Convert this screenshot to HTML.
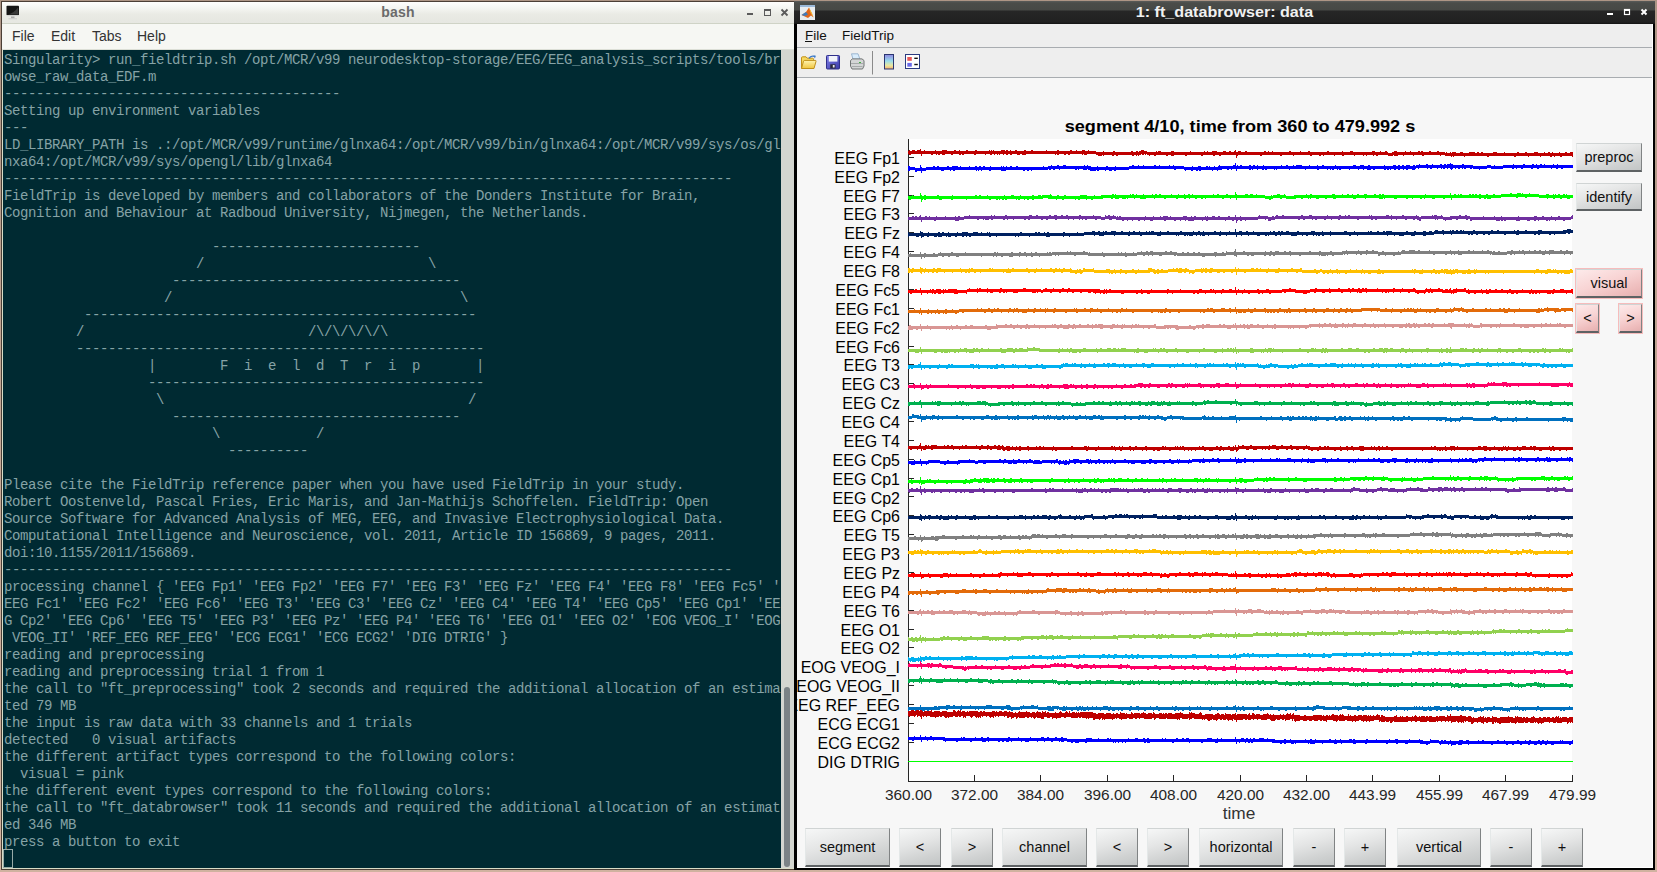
<!DOCTYPE html>
<html><head><meta charset="utf-8">
<style>
*{margin:0;padding:0;box-sizing:border-box}
html,body{width:1657px;height:872px;overflow:hidden}
body{position:relative;background:linear-gradient(#ad9585,#c4a896 50%,#d0b2a0);font-family:"Liberation Sans",sans-serif}
.abs{position:absolute}
/* bash window */
#bash{position:absolute;left:1px;top:1px;width:794px;height:869px;background:#d9dcc6;border:1px solid #4b3f36}
#btitle{position:absolute;left:0;top:0;width:792px;height:22px;background:linear-gradient(#fefefd 0%,#f4f5f1 30%,#e9eae4 60%,#e6e7e1 100%);border-bottom:1px solid #cfd3c6}
#btitle .t{position:absolute;left:0;width:792px;top:1.5px;text-align:center;font-weight:bold;font-size:14px;color:#6b6b6b;letter-spacing:0.2px}
#bmenu{position:absolute;left:0;top:22px;width:792px;height:26px;background:#f6f7f3;border-bottom:1px solid #dcdfd6}
#bmenu span{position:absolute;top:4px;font-size:14px;color:#333}
#term{position:absolute;left:1px;top:48px;width:778px;height:818px;background:#002a32;overflow:hidden}
#term pre{position:absolute;left:1px;top:2px;font-family:"Liberation Mono",monospace;font-size:14px;letter-spacing:-0.4px;line-height:17px;color:#86a3a6;white-space:pre}
#cursor{position:absolute;left:0px;top:799px;width:10px;height:19px;border:1px solid #98aaa8}
#sb{position:absolute;left:779px;top:48px;width:13px;height:818px;background:#d3d6d0}
#thumb{position:absolute;left:3px;top:637px;width:6px;height:180px;background:#7b8386;border-radius:3px}
/* matlab window */
#mw{position:absolute;left:794px;top:1px;width:861px;height:869px;background:#000;}
#mtitle{position:absolute;left:0;top:0;width:861px;height:23px;background:linear-gradient(#5a5c5a 0px,#4a4c49 2px,#474946 9px,#262626 10px,#212121 21px,#121212 23px)}
#mtitle .t{position:absolute;left:0;width:861px;top:1.5px;text-align:center;font-weight:bold;font-size:15.5px;color:#f0f0f0;transform:scaleX(1.04);transform-origin:431px 0}
#mcontent{position:absolute;left:3px;top:23px;width:856px;height:844px;background:#f7f7f7;border-right:1px solid #fff;border-bottom:1px solid #fff}
#mmenu{position:absolute;left:0;top:0;width:855px;height:24px;background:#eeeeee;border-bottom:1px solid #a8acb0}
#mmenu span{position:absolute;top:4px;font-size:13.5px;color:#111}
#mtool{position:absolute;left:0;top:24px;width:855px;height:30px;background:#eeeeee;border-bottom:1px solid #a8acb0}
.yl{position:absolute;left:700px;width:198px;text-align:right;font-size:16.5px;line-height:19px;color:#000;white-space:nowrap;transform:scaleX(0.967);transform-origin:198px 0}
#ylwrap{position:absolute;left:797px;top:0;width:120px;height:872px;overflow:hidden}
#ylwrap .yl{left:-95.5px}
.xl{position:absolute;top:786px;width:80px;text-align:center;font-size:15.4px;line-height:17px;color:#262626}
.btn{position:absolute;text-align:center;font-size:14.5px;color:#111;background:linear-gradient(165deg,#f6f7f7 0%,#e4e5e5 40%,#cfd1d1 75%,#c2c5c5 100%);border:1px solid #d0d4d4;border-left-color:#e4e8e8;border-right-color:#808384;border-bottom:2px solid #5e6264}
.btn.pink{background:linear-gradient(160deg,#fdeaea 0%,#f8d4d4 45%,#eebcbc 80%,#e4b0b0 100%);box-shadow:0 0 0 1px #f6bcbc}
</style></head><body>
<div id="bash">
  <div id="btitle">
    <svg class="abs" style="left:4px;top:3px" width="16" height="17" viewBox="0 0 16 17"><rect x="0.5" y="0.8" width="12.5" height="9.5" rx="0.8" fill="#151515"/><path d="M2 9.5 Q8 8 12 2.5 L12.5 9.5Z" fill="#3a3a3a"/><rect x="0.5" y="10.3" width="12.5" height="1.2" fill="#e0e0e0"/><rect x="5" y="11.5" width="3.5" height="1.8" fill="#aaa"/><rect x="2.5" y="13.3" width="8.5" height="1" fill="#ccc"/></svg>
    <div class="t">bash</div>
    <svg class="abs" style="left:740px;top:5px" width="52" height="14" viewBox="0 0 52 14" shape-rendering="crispEdges"><rect x="5" y="6" width="6" height="2" fill="#5a5a5a"/><rect x="22.5" y="2.5" width="6" height="6" fill="none" stroke="#5a5a5a" stroke-width="1"/><rect x="22" y="2" width="7" height="2" fill="#5a5a5a"/><path d="M39.5 2.5L45.5 8.5M45.5 2.5L39.5 8.5" stroke="#5a5a5a" stroke-width="1.8" shape-rendering="auto"/></svg>
  </div>
  <div id="bmenu"><span style="left:10px">File</span><span style="left:49px">Edit</span><span style="left:90px">Tabs</span><span style="left:135px">Help</span></div>
  <div id="term"><pre>Singularity&gt; run_fieldtrip.sh /opt/MCR/v99 neurodesktop-storage/EEG/EEG_analysis_scripts/tools/br
owse_raw_data_EDF.m
------------------------------------------
Setting up environment variables
---
LD_LIBRARY_PATH is .:/opt/MCR/v99/runtime/glnxa64:/opt/MCR/v99/bin/glnxa64:/opt/MCR/v99/sys/os/gl
nxa64:/opt/MCR/v99/sys/opengl/lib/glnxa64
-------------------------------------------------------------------------------------------
FieldTrip is developed by members and collaborators of the Donders Institute for Brain,
Cognition and Behaviour at Radboud University, Nijmegen, the Netherlands.

                          --------------------------
                        /                            \
                     ------------------------------------
                    /                                    \
          -------------------------------------------------
         /                            /\/\/\/\/\
         ---------------------------------------------------
                  |        F  i  e  l  d  T  r  i  p       |
                  ------------------------------------------
                   \                                      /
                     ------------------------------------
                          \            /
                            ----------

Please cite the FieldTrip reference paper when you have used FieldTrip in your study.
Robert Oostenveld, Pascal Fries, Eric Maris, and Jan-Mathijs Schoffelen. FieldTrip: Open
Source Software for Advanced Analysis of MEG, EEG, and Invasive Electrophysiological Data.
Computational Intelligence and Neuroscience, vol. 2011, Article ID 156869, 9 pages, 2011.
doi:10.1155/2011/156869.
-------------------------------------------------------------------------------------------
processing channel { &#x27;EEG Fp1&#x27; &#x27;EEG Fp2&#x27; &#x27;EEG F7&#x27; &#x27;EEG F3&#x27; &#x27;EEG Fz&#x27; &#x27;EEG F4&#x27; &#x27;EEG F8&#x27; &#x27;EEG Fc5&#x27; &#x27;
EEG Fc1&#x27; &#x27;EEG Fc2&#x27; &#x27;EEG Fc6&#x27; &#x27;EEG T3&#x27; &#x27;EEG C3&#x27; &#x27;EEG Cz&#x27; &#x27;EEG C4&#x27; &#x27;EEG T4&#x27; &#x27;EEG Cp5&#x27; &#x27;EEG Cp1&#x27; &#x27;EE
G Cp2&#x27; &#x27;EEG Cp6&#x27; &#x27;EEG T5&#x27; &#x27;EEG P3&#x27; &#x27;EEG Pz&#x27; &#x27;EEG P4&#x27; &#x27;EEG T6&#x27; &#x27;EEG O1&#x27; &#x27;EEG O2&#x27; &#x27;EOG VEOG_I&#x27; &#x27;EOG
 VEOG_II&#x27; &#x27;REF_EEG REF_EEG&#x27; &#x27;ECG ECG1&#x27; &#x27;ECG ECG2&#x27; &#x27;DIG DTRIG&#x27; }
reading and preprocessing
reading and preprocessing trial 1 from 1
the call to &quot;ft_preprocessing&quot; took 2 seconds and required the additional allocation of an estima
ted 79 MB
the input is raw data with 33 channels and 1 trials
detected   0 visual artifacts
the different artifact types correspond to the following colors:
  visual = pink
the different event types correspond to the following colors:
the call to &quot;ft_databrowser&quot; took 11 seconds and required the additional allocation of an estimat
ed 346 MB
press a button to exit</pre><div id="cursor"></div></div>
  <div id="sb"><div id="thumb"></div></div>
</div>
<div id="mw">
  <div id="mtitle">
    <svg class="abs" style="left:6px;top:4px" width="15" height="16" viewBox="0 0 15 16"><rect x="0" y="0" width="15" height="15" fill="#e8ecf0"/><rect x="0" y="0" width="15" height="2" fill="#9ab8d8"/><path d="M1.5 10 L6 7 L9 2.5 L13.5 12.5 L11 10.5 L8 13 Z" fill="#e0651b"/><path d="M1.5 10 L6 7 L8 9.5 L5 11 Z" fill="#3b7bc0"/><path d="M9 2.5 L12 8 L13.5 12.5 L10.5 8Z" fill="#f2b233"/></svg>
    <div class="t">1: ft_databrowser: data</div>
    <svg class="abs" style="left:806px;top:6px" width="52" height="14" viewBox="0 0 52 14"><rect x="7" y="6" width="6" height="2" fill="#fff"/><rect x="24.5" y="2.5" width="5" height="5" fill="none" stroke="#fff" stroke-width="1.2"/><rect x="24" y="2" width="6" height="2" fill="#fff"/><path d="M41.5 2.5L46.5 7.5M46.5 2.5L41.5 7.5" stroke="#fff" stroke-width="2"/></svg>
  </div>
  <div id="mcontent">
    <div id="mmenu"><span style="left:8px;">File</span><span style="left:45px">FieldTrip</span><div class="abs" style="left:8px;top:17px;width:7px;height:1px;background:#111"></div></div>
    <div id="mtool">
      <svg class="abs" style="left:0;top:0" width="140" height="30" viewBox="0 0 140 30">
        <defs><linearGradient id="fo" x1="0" y1="0" x2="0" y2="1"><stop offset="0" stop-color="#fff4b0"/><stop offset="1" stop-color="#f0c640"/></linearGradient>
        <linearGradient id="fl" x1="0" y1="0" x2="1" y2="1"><stop offset="0" stop-color="#8080e8"/><stop offset="1" stop-color="#3a3aa8"/></linearGradient>
        <linearGradient id="cb" x1="0" y1="0" x2="0" y2="1"><stop offset="0" stop-color="#8e86e0"/><stop offset="0.45" stop-color="#98dcec"/><stop offset="0.75" stop-color="#e8e8a0"/><stop offset="1" stop-color="#f8b070"/></linearGradient></defs>
        <path d="M4.5 20.5V9.8q0-1 1-1h3.5l1.2 1.4h5.3q1 0 1 1v1.3" fill="#f6d860" stroke="#c0901a" stroke-width="1"/>
        <path d="M4.5 20.5l2-7.3q0.3-0.8 1.2-0.8h10.6q1 0 0.7 1l-2 7.1z" fill="url(#fo)" stroke="#c0901a" stroke-width="1"/>
        <path d="M12 10.3q2-3.2 5.5-1.8" fill="none" stroke="#3a78c8" stroke-width="1.3"/><path d="M16.3 7.2l2.6 0.6-1 2.6z" fill="#3a78c8"/>
        <rect x="29.5" y="7.5" width="13" height="13.5" rx="0.8" fill="url(#fl)" stroke="#30308a"/>
        <rect x="31.8" y="8" width="8.6" height="5.6" fill="#f2f4fa"/>
        <rect x="33.3" y="16.3" width="5.2" height="4.2" fill="#2a2a3a"/><rect x="35.8" y="17" width="1.8" height="2.5" fill="#e8e8f0"/>
        <path d="M54.5 5.8h6.5l2 5.5h-7z" fill="#d8ecfc" stroke="#8aa8c8" stroke-width="0.8"/>
        <path d="M53.5 12.5l2-1.6h9.5l2 1.6v5.5l-1.5 3h-10.5l-1.5-3z" fill="#d4d6d6" stroke="#707474" stroke-width="1"/>
        <path d="M54 15.5h12.5M55 18.5h10.5" stroke="#9a9e9e" stroke-width="0.8"/><rect x="62" y="14" width="2" height="1" fill="#40b040"/>
        <rect x="75" y="3" width="1" height="23.5" fill="#8a8a8a"/>
        <rect x="87.5" y="6.5" width="9" height="14.5" fill="url(#cb)" stroke="#2a3570"/>
        <rect x="108.5" y="6.5" width="14" height="14" fill="#fff" stroke="#2a3a80"/><rect x="110.3" y="9" width="4.5" height="3.8" fill="#e85858"/><rect x="110.3" y="14.9" width="4.5" height="3.8" fill="#6a6ae8"/><rect x="117.3" y="9.6" width="3.5" height="1.4" fill="#111"/><rect x="117.3" y="15.8" width="3.5" height="1.4" fill="#111"/>
      </svg>
    </div>
  </div>
</div>
<div class="abs" style="left:1040px;top:117px;width:400px;text-align:center;font-weight:bold;font-size:16px;line-height:20px;color:#000;white-space:nowrap;transform:scaleX(1.133)">segment 4/10, time from 360 to 479.992 s</div>
<svg id="plot" width="1657" height="872" viewBox="0 0 1657 872" shape-rendering="crispEdges" style="position:absolute;left:0;top:0">
<rect x="909" y="139" width="663" height="642" fill="#ffffff"/>
<path d="M908 157.5h6M908 176.5h6M908 195.5h6M908 213.5h6M908 232.5h6M908 251.5h6M908 270.5h6M908 289.5h6M908 308.5h6M908 327.5h6M908 346.5h6M908 364.5h6M908 383.5h6M908 402.5h6M908 421.5h6M908 440.5h6M908 459.5h6M908 478.5h6M908 496.5h6M908 515.5h6M908 534.5h6M908 553.5h6M908 572.5h6M908 591.5h6M908 610.5h6M908 629.5h6M908 647.5h6M908 666.5h6M908 685.5h6M908 704.5h6M908 723.5h6M908 742.5h6M908 761.5h6M908.5 781v-6M974.5 781v-6M1040.5 781v-6M1107.5 781v-6M1173.5 781v-6M1240.5 781v-6M1306.5 781v-6M1372.5 781v-6M1439.5 781v-6M1505.5 781v-6M1572.5 781v-6" stroke="#262626" stroke-width="1" fill="none"/>
<path d="M908.5 139V781.5H1572.5" stroke="#262626" stroke-width="1" fill="none"/>
<path fill="#bf0000" d="M908 151h1v-1h1v1h2v-1h3v1h2v-1h3v-1h1v2h3v-1h1v1h10v-1h1v1h6v-1h5v1h7v-1h2v1h3v-1h1v1h6v-1h2v1h7v-1h2v1h12v-1h1v1h1v-1h1v1h1v-1h1v1h7v-1h4v1h1v-1h2v1h2v-1h1v1h4v-1h2v1h7v-1h2v1h5v-1h2v1h13v-1h1v1h10v-1h2v1h11v-1h2v1h4v-1h1v1h5v-1h3v1h3v-1h1v1h7v1h7v-1h1v1h9v-1h2v1h16v-1h2v1h3v-1h2v1h1v-1h2v-1h3v1h3v1h9v-1h1v1h1v-1h3v1h10v-1h3v1h16v-1h1v1h13v-1h1v1h2v-1h1v1h4v-1h5v1h6v-1h3v1h3v-1h2v1h3v-1h1v-1h1v2h2v-1h3v1h4v-1h2v1h17v-1h2v1h2v-1h1v1h3v-1h1v1h16v-1h2v1h9v-1h1v1h7v-1h2v1h17v-1h2v1h13v-1h1v1h7v-1h3v1h19v-1h3v1h5v-1h1v1h4v-1h2v1h1v1h4v-1h2v-1h3v1h8v-1h1v1h4v-1h1v1h7v-1h2v1h1v-1h2v1h6v-1h2v1h6v-1h2v1h6v1h1v-1h1v1h3v-1h1v1h1v-1h4v1h4v-1h3v1h6v-1h6v1h2v-1h2v1h2v-1h2v1h10v-1h4v1h7v-1h1v1h12v-1h2v1h6v-1h2v1h7v-1h4v1h6v-1h1v1h3v-1h2v1h2v-1h1v1h6v-1h1v1h5v-1h2v1h3v-1h3v5h-1v-1h-10v1h-2v-1h-5v1h-1v-1h-2v1h-2v-1h-9v1h-1v-1h-11v1h-1v-1h-12v1h-2v-1h-25v1h-2v-1h-22v1h-1v-1h-10v1h-1v-1h-1v1h-1v-1h-6v-1h-4v1h-1v-1h-16v1h-2v-1h-8v1h-1v-1h-9v1h-1v-1h-5v1h-4v-1h-1v1h-5v-1h-10v1h-2v-1h-2v1h-1v-1h-6v1h-1v-1h-2v1h-1v-1h-8v1h-1v-1h-10v1h-2v-1h-7v1h-1v-1h-10v1h-1v-1h-2v1h-2v-1h-7v1h-2v-1h-16v1h-1v-1h-11v1h-2v-1h-18v1h-2v-1h-22v1h-1v2h-1v-3h-15v1h-2v-1h-4v1h-2v-1h-10v1h-2v-1h-14v1h-2v-1h-11v1h-3v-1h-3v1h-2v-1h-10v1h-2v-1h-4v1h-1v-1h-2v-1h-1v1h-1v-1h-1v1h-2v-1h-1v1h-2v1h-1v-1h-1v1h-1v-1h-2v1h-2v-1h-14v1h-2v-1h-2v1h-2v-1h-8v1h-1v-1h-1v1h-4v-1h-2v-1h-9v1h-3v-1h-1v1h-1v-1h-12v1h-2v-1h-2v1h-2v-1h-5v1h-2v-1h-1v1h-1v-1h-29v1h-4v-1h-2v1h-3v-1h-5v1h-2v-1h-2v1h-2v-1h-2v1h-1v-1h-3v1h-1v-1h-1v1h-1v-1h-2v1h-1v-1h-2v1h-2v-1h-4v1h-1v-1h-9v1h-2v-1h-10v1h-2v-1h-1v1h-2v-1h-6v1h-2v-1h-6v1h-3v-1h-2v1h-2v-1h-1v1h-1v-1h-3v1h-2v-1h-9v2h-1v-2h-10v1h-2v-1h-1Z"/>
<path fill="#0000ff" d="M908 166h2v1h5v1h5v-3h1v2h1v1h4v-1h7v-1h2v1h2v-1h2v1h8v-1h2v1h3v-1h6v1h2v-1h1v1h8v-1h1v1h5v-1h2v1h2v-1h2v1h2v-1h2v1h5v-1h1v1h10v-1h1v1h1v-1h1v1h2v-1h1v1h3v-1h2v1h4v-1h2v1h25v-1h1v1h4v-1h3v-1h1v1h5v-1h2v1h4v-1h3v1h18v-1h1v1h2v-1h1v1h3v1h6v-1h1v1h8v-1h2v1h7v-1h1v1h13v-1h3v-1h2v1h4v-1h1v1h4v-1h1v1h10v-1h2v1h3v-1h1v1h9v-1h1v1h3v-1h1v1h10v1h8v-1h1v1h5v-1h3v1h5v-1h2v1h1v-1h1v1h4v-1h1v1h3v-1h1v-1h1v1h13v-1h2v-2h1v3h1v-1h1v1h2v-1h2v1h7v-1h2v1h2v-1h2v1h2v-1h1v1h5v-1h1v1h17v-1h1v1h4v-1h2v1h5v-1h1v1h2v-1h6v1h7v-1h1v1h7v-1h1v1h4v-1h2v1h11v-1h1v1h17v-1h3v1h4v-1h4v1h4v-1h2v1h14v-1h1v1h8v-1h3v1h2v-1h2v1h2v-1h2v1h2v-1h4v1h3v-1h2v1h1v-1h3v-1h1v1h6v-1h2v1h4v-1h1v1h7v-1h2v1h2v-1h2v1h1v-1h3v-1h1v1h2v1h9v-1h2v1h9v1h14v-1h4v1h3v-1h1v1h8v-1h10v-1h1v1h9v-1h2v1h7v-1h2v1h2v-1h1v1h3v-1h2v1h2v-1h1v1h8v-1h1v1h3v-1h1v1h15v3h-10v1h-2v-1h-3v1h-2v-1h-4v1h-1v-1h-12v1h-2v-1h-4v1h-2v-1h-8v1h-2v-1h-4v1h-1v-1h-2v1h-2v-1h-9v1h-12v-1h-4v1h-7v1h-1v-1h-6v-1h-1v1h-2v-1h-4v1h-2v-1h-1v1h-1v-1h-2v1h-2v-1h-2v1h-1v-1h-2v1h-1v1h-1v-1h-1v-1h-2v1h-1v-1h-2v1h-2v-1h-1v1h-1v-1h-3v1h-1v-1h-5v1h-2v-1h-2v1h-1v-1h-8v1h-1v-1h-2v1h-1v1h-3v-1h-4v1h-2v-1h-2v1h-1v-1h-3v1h-2v-1h-2v1h-2v-1h-3v1h-1v-1h-1v1h-2v-1h-1v1h-2v-1h-9v1h-2v-1h-2v1h-4v-1h-3v1h-1v-1h-4v1h-1v-1h-8v1h-1v-1h-8v1h-2v-1h-1v1h-1v-1h-3v1h-2v-1h-1v1h-1v-1h-2v1h-1v-1h-8v1h-2v-1h-11v1h-1v-1h-15v1h-1v-1h-12v1h-1v-1h-1v1h-1v-1h-7v1h-2v-1h-1v1h-2v-1h-4v1h-1v-1h-4v1h-1v-1h-1v1h-2v-1h-12v2h-1v-2h-4v1h-1v-1h-2v1h-2v-1h-5v1h-4v1h-1v-1h-4v1h-1v-1h-11v1h-2v-1h-1v1h-2v-1h-3v1h-2v-1h-5v1h-1v-1h-1v-1h-8v1h-2v-1h-45v1h-13v1h-2v-1h-2v1h-3v-1h-3v1h-1v-1h-6v1h-2v-1h-1v1h-6v-1h-2v-1h-1v1h-4v-1h-4v1h-1v-1h-1v1h-2v-1h-15v1h-1v-1h-4v1h-2v-1h-2v1h-2v-1h-1v1h-16v1h-1v-1h-2v1h-2v-1h-2v1h-2v-1h-17v1h-5v-1h-10v1h-2v-1h-7v1h-1v-1h-2v1h-1v-1h-1v1h-1v-1h-21v1h-2v-1h-2v1h-1v-1h-6v1h-3v-1h-15v1h-4v2h-1v-2h-4v1h-2v-2h-5v1h-2Z"/>
<path fill="#00ff00" d="M908 196h4v-1h1v1h7v-3h1v2h1v1h2v-1h2v1h11v-1h2v1h13v-1h1v1h22v-1h2v1h2v-1h2v1h6v-1h1v1h16v-1h1v1h6v-1h3v1h6v-1h1v1h11v-1h2v1h4v-1h3v1h1v-1h8v-1h1v1h1v1h5v-1h2v1h5v-1h2v1h14v-1h7v1h7v-1h1v1h6v-1h11v-1h2v1h1v-1h1v1h14v-1h1v1h1v-1h2v1h2v-1h1v1h6v-1h1v1h8v-1h1v1h2v-1h2v1h2v-1h2v1h10v-1h1v1h6v-1h1v1h5v-1h1v1h3v-1h2v1h2v-1h1v1h20v-1h1v1h3v-1h2v1h7v-1h2v1h7v-3h1v2h1v1h8v-1h3v1h2v-1h3v1h3v-1h1v1h8v1h6v-1h1v1h1v-1h4v-1h3v1h4v-1h1v1h1v1h8v-1h12v-1h1v1h3v-1h2v1h20v-1h3v1h7v-1h1v1h4v-1h2v1h3v-1h1v1h4v-1h2v1h5v-1h3v1h7v-1h2v1h3v-1h2v1h1v-1h2v1h41v-1h1v1h24v-2h1v2h3v-1h2v1h2v-1h1v1h1v-1h2v1h7v-1h2v1h1v-1h2v1h1v-1h2v1h2v-1h2v1h5v-1h2v1h5v-1h2v1h6v-1h9v-1h2v1h5v-1h4v1h1v-1h1v1h6v-1h1v1h9v1h7v-1h3v1h4v-1h1v1h1v-1h1v1h2v-1h2v1h3v-1h2v1h1v-1h1v1h6v3h-3v1h-3v-1h-5v1h-2v-1h-5v1h-2v-1h-5v1h-1v-1h-8v-1h-12v1h-2v-1h-7v1h-2v-1h-15v1h-10v1h-4v-1h-1v1h-2v-1h-3v1h-2v-1h-27v2h-1v-2h-6v1h-2v-1h-8v1h-3v-1h-7v1h-1v-1h-2v1h-2v-1h-7v1h-1v-1h-4v1h-2v-1h-9v1h-3v-1h-9v1h-1v-1h-1v1h-4v-1h-13v1h-1v-1h-9v1h-3v-1h-17v1h-3v-1h-6v1h-2v-1h-6v1h-3v-1h-5v1h-1v-1h-1v1h-1v-1h-5v1h-2v-1h-5v1h-10v-1h-4v1h-2v-1h-7v1h-2v1h-2v-1h-4v-1h-28v2h-1v-2h-5v1h-1v-1h-6v1h-2v-1h-16v1h-1v-1h-2v1h-2v-1h-4v1h-2v-1h-5v1h-1v-1h-3v1h-2v-1h-6v1h-2v-1h-10v1h-2v-1h-9v1h-1v-1h-8v1h-6v-1h-5v1h-1v-1h-6v1h-1v-1h-1v1h-4v-1h-3v1h-4v-1h-2v1h-2v-1h-8v1h-10v1h-2v-1h-4v1h-1v-1h-6v1h-2v-1h-2v1h-1v-1h-11v1h-2v-1h-5v1h-1v-1h-8v-1h-5v1h-9v1h-2v-1h-3v1h-2v-1h-2v1h-1v-1h-4v1h-2v-1h-1v1h-1v-1h-9v1h-2v-1h-1v1h-2v-1h-2v1h-1v-1h-1v1h-2v-1h-5v1h-2v-1h-22v1h-1v-1h-13v1h-2v-1h-9v1h-3v-1h-13v1h-2v-1h-1v1h-1v2h-1v-3h-10v1h-2v-1h-1Z"/>
<path fill="#7030a0" d="M908 217h4v-1h2v1h1v-1h2v1h2v-1h1v-1h1v2h4v-1h2v1h2v-1h1v1h6v-1h1v1h8v-1h1v1h9v-1h1v1h2v-1h2v1h4v-1h5v-1h1v1h21v-1h1v1h2v-1h1v1h10v-1h2v1h22v-1h3v1h4v-1h2v1h11v-1h2v1h3v-1h3v1h4v-1h2v1h3v-1h2v1h11v-1h2v1h12v-1h1v1h7v1h4v-2h1v1h2v-1h2v1h3v-1h1v1h2v1h1v-1h1v1h1v-1h2v1h24v-1h1v1h7v-1h1v1h6v-1h1v1h2v-1h5v1h2v-1h1v1h12v-1h4v1h4v-1h1v1h2v-1h2v1h9v-1h1v1h1v-1h1v1h4v-1h3v1h3v-1h2v1h8v-1h2v1h5v-2h1v2h4v-1h1v1h17v-1h1v-1h1v1h8v1h4v-1h2v1h1v-1h1v-1h2v1h4v-1h2v1h17v-1h2v1h6v-1h3v1h15v-1h1v1h11v-1h2v1h4v-1h1v1h2v-1h2v1h19v-1h1v1h1v-1h1v1h14v-1h3v1h2v-1h1v1h10v-1h2v1h12v-1h1v1h2v1h2v-1h11v-1h1v1h1v-1h3v1h4v-1h1v1h1v1h7v-1h9v-1h2v1h4v-1h2v1h3v1h13v-1h1v1h10v-1h1v1h6v-1h1v1h16v-1h1v1h15v-1h3v1h5v-1h2v1h7v-1h1v1h6v-1h2v1h11v-1h1v-1h1v4h-2v1h-6v1h-2v-1h-7v1h-1v-1h-5v1h-1v-1h-1v1h-2v-1h-7v1h-1v-1h-2v1h-2v-1h-4v1h-3v-1h-7v1h-4v-1h-10v1h-2v-1h-1v1h-2v-1h-1v1h-4v-1h-24v1h-2v-2h-2v1h-2v-1h-8v1h-2v-1h-4v1h-6v1h-1v-1h-2v-1h-5v1h-1v-1h-1v1h-1v-1h-14v2h-2v-1h-2v-1h-2v1h-2v-1h-6v1h-2v-1h-8v1h-1v-1h-4v1h-1v-1h-14v1h-2v-1h-2v1h-2v-1h-12v1h-2v-1h-17v1h-2v-1h-6v1h-1v-1h-5v1h-2v-1h-7v1h-2v-1h-2v1h-1v-1h-7v1h-2v-1h-3v1h-2v-1h-23v1h-4v1h-3v-2h-2v1h-1v-1h-7v1h-12v1h-1v-1h-3v1h-2v-1h-2v1h-1v2h-1v-3h-2v1h-2v-1h-6v1h-1v-1h-17v1h-2v-1h-3v1h-1v-1h-8v1h-6v-1h-2v1h-1v-1h-4v1h-1v-1h-4v1h-2v-1h-8v1h-2v-1h-11v1h-3v-1h-5v1h-1v-1h-4v1h-2v-1h-5v1h-1v-1h-4v1h-1v-1h-3v1h-2v-1h-6v-1h-4v1h-3v-1h-4v1h-4v-1h-4v1h-2v-1h-8v1h-2v-1h-2v1h-1v-1h-2v1h-1v-1h-5v1h-1v-1h-4v1h-1v-1h-11v1h-2v-1h-7v1h-2v-1h-3v1h-2v-1h-11v1h-2v-1h-2v1h-2v-1h-10v1h-1v-1h-5v1h-1v-1h-2v1h-2v-1h-10v1h-2v-1h-2v1h-4v-1h-1v1h-1v-1h-4v1h-2v-1h-13v1h-5v1h-4v-1h-19v1h-2v-1h-12v2h-1v-2h-13Z"/>
<path fill="#002161" d="M908 232h1v1h11v-2h1v1h2v1h5v-1h1v1h9v-1h2v1h2v-1h2v1h4v-1h1v1h8v-1h1v1h4v-1h6v1h5v-1h5v1h3v-1h1v1h5v-1h1v1h1v-1h1v1h30v-1h2v1h13v-1h2v1h1v-1h2v1h4v-1h1v1h2v-1h2v1h14v-1h2v1h12v-1h1v1h6v-1h8v-1h3v1h3v-1h2v1h3v-1h1v1h1v-1h2v1h4v-1h5v1h5v-1h2v1h6v-1h1v1h3v-1h2v1h4v-1h1v1h6v-1h1v1h2v-1h1v1h1v-1h3v1h6v-1h1v1h6v-1h2v1h11v-1h2v1h11v-1h1v1h4v-1h2v1h3v-1h1v1h10v-1h2v1h4v-1h1v1h8v-1h1v1h5v-3h1v3h3v-1h3v1h4v-1h2v1h5v-1h1v1h16v-1h1v1h2v-1h2v1h3v-1h2v1h1v-1h2v1h3v-1h3v1h8v-1h2v1h12v-1h4v1h7v-1h1v1h7v-1h1v1h13v-1h3v1h7v-1h1v1h13v-1h1v1h1v-1h2v1h5v-1h2v1h4v-1h2v1h1v-1h6v1h14v-1h2v1h6v-1h2v1h7v-1h3v1h3v-1h3v1h2v-1h1v-1h3v1h4v-1h2v1h6v-1h1v1h1v-1h2v1h2v-1h2v1h2v-1h2v1h1v-1h1v1h9v-1h2v1h16v-1h2v1h4v-1h2v1h15v-1h1v1h2v-1h2v1h6v-1h2v1h11v-1h4v1h21v-1h4v-1h4v1h2v3h-3v1h-2v-1h-2v1h-11v1h-1v-1h-3v1h-2v-1h-9v1h-2v-1h-2v1h-2v-1h-15v1h-3v-1h-10v1h-2v-1h-14v1h-2v-1h-3v1h-2v-1h-5v1h-2v-1h-3v1h-2v-1h-1v1h-2v-1h-16v1h-1v-1h-7v1h-1v-1h-9v1h-8v1h-3v-1h-8v1h-4v-1h-7v1h-5v-1h-4v1h-1v-1h-6v1h-1v-1h-29v1h-1v-1h-6v1h-2v-1h-18v1h-1v-1h-6v1h-2v-1h-2v1h-2v-1h-1v1h-1v-1h-2v1h-1v-1h-5v1h-2v-1h-3v1h-1v-1h-5v1h-6v-1h-10v1h-1v-1h-3v1h-2v-1h-6v1h-1v-1h-1v1h-2v-1h-5v1h-3v-1h-8v1h-1v-1h-6v1h-1v-1h-4v2h-1v-2h-9v1h-1v-1h-5v1h-2v-1h-10v1h-1v-1h-3v1h-3v-1h-1v1h-1v-1h-3v1h-1v-1h-3v1h-4v-1h-1v1h-1v-1h-1v1h-2v-1h-5v1h-1v-1h-1v1h-1v-1h-15v1h-4v-1h-15v1h-2v-1h-10v1h-2v-1h-13v1h-1v-1h-10v1h-5v-1h-4v1h-1v-1h-10v1h-14v1h-1v-1h-5v1h-1v-1h-13v1h-4v-1h-16v1h-1v-1h-10v1h-1v-1h-2v1h-1v-1h-18v1h-1v-1h-5v1h-2v-1h-18v1h-2v-1h-2v1h-1v-1h-2v1h-2v-1h-5v1h-2v-1h-4v1h-3v-1h-1v1h-1v-1h-4v1h-4v-1h-1v1h-3v-1h-5v1h-2v-1h-3v1h-2v1h-1v-2h-2v1h-3v-1h-7v1h-1Z"/>
<path fill="#808080" d="M908 254h2v-1h1v1h9v-2h1v2h3v-1h2v1h7v-1h2v1h3v-1h2v-1h1v1h10v-1h2v1h12v-1h1v1h28v-1h2v1h1v-1h1v1h13v-1h2v1h6v-1h2v1h3v-1h2v1h5v-1h1v1h3v-1h2v1h10v-1h1v1h1v-1h2v1h1v-1h15v-1h1v1h2v-1h1v1h12v-1h2v1h3v1h1v-1h1v1h12v-1h1v1h15v-1h1v1h2v-1h1v1h3v-1h1v1h7v-1h1v1h3v-1h4v-1h1v1h4v-1h2v1h2v-1h3v1h12v-1h2v1h3v-1h2v1h5v1h5v-1h2v1h3v-1h2v1h4v-1h2v1h3v-1h2v1h14v-1h3v1h5v-1h2v1h2v-2h1v1h7v-1h1v-2h1v3h7v-1h2v1h20v-1h1v1h4v-1h2v1h3v-1h4v1h5v-1h2v1h3v-1h2v1h18v-1h2v1h8v-1h2v1h9v-1h2v1h10v-1h4v-1h1v1h11v-1h1v1h7v-1h2v1h4v-1h2v1h4v1h4v-1h2v1h14v-1h1v1h2v-1h1v-1h3v1h4v-1h6v1h3v-1h2v1h9v-1h1v1h20v-1h1v1h7v-1h1v1h9v-1h2v1h3v-1h1v1h8v-1h1v1h4v-1h2v1h3v1h1v-1h2v1h3v-1h2v1h7v-1h4v-1h2v1h6v-1h1v1h2v-1h2v1h5v-1h1v1h4v-1h2v1h3v-1h2v1h4v-1h1v1h3v-1h5v1h6v-1h2v1h4v-1h2v1h5v3h-2v1h-1v-1h-5v1h-1v-1h-14v1h-1v-1h-4v1h-3v-1h-17v1h-1v-1h-9v1h-1v-1h-2v1h-2v-1h-3v1h-15v-1h-1v1h-1v-1h-28v1h-4v-1h-3v1h-1v-1h-2v1h-1v-1h-4v1h-2v-1h-10v1h-2v-1h-32v1h-6v1h-2v-1h-7v1h-1v-1h-5v1h-2v-2h-11v1h-1v-1h-4v1h-2v-1h-3v1h-1v-1h-8v1h-1v-1h-2v1h-1v-1h-1v1h-9v1h-2v-1h-4v1h-1v-1h-1v1h-5v-1h-1v1h-1v-1h-18v1h-2v-1h-8v1h-1v-1h-15v1h-2v-1h-2v1h-2v-1h-3v1h-2v-1h-10v1h-3v-1h-2v1h-2v-1h-10v2h-1v-1h-2v-1h-8v1h-10v1h-1v-1h-10v1h-3v-1h-25v-1h-1v1h-2v-1h-12v1h-3v-1h-6v1h-1v-1h-3v1h-1v-1h-3v1h-2v-1h-6v1h-10v1h-2v-1h-20v1h-2v-1h-15v-1h-12v1h-2v-1h-15v1h-1v-1h-2v1h-1v-1h-3v1h-12v1h-1v-1h-6v1h-2v-1h-4v1h-1v-1h-6v1h-1v-1h-6v1h-4v-1h-6v1h-2v-1h-4v1h-1v-1h-2v1h-1v-1h-11v1h-1v-1h-22v1h-3v-1h-6v1h-2v-1h-4v1h-2v-1h-4v1h-13v1h-1v-1h-2v2h-1v-2h-13Z"/>
<path fill="#ffbf00" d="M908 268h2v1h2v-1h2v1h6v-2h1v1h2v1h2v-1h1v1h7v-1h2v1h2v-1h4v1h19v-1h1v1h8v-1h1v1h1v-1h2v1h16v-1h2v1h1v-1h1v1h15v-1h1v1h3v-1h2v1h12v-1h2v1h8v-1h1v1h4v-1h1v1h8v-1h2v1h3v-1h2v1h2v-1h1v1h3v-1h2v1h5v-1h1v1h1v1h5v-1h1v1h1v-1h2v1h2v-2h2v1h8v-1h1v2h12v-1h4v1h4v-1h1v1h5v-1h2v1h10v-1h2v1h4v-1h1v1h9v-2h4v1h3v1h2v-1h2v1h2v-1h2v1h5v-1h5v-1h1v1h2v-1h2v1h1v-1h3v1h3v-1h2v1h2v1h6v-1h6v-1h1v1h1v-1h1v1h1v-1h2v1h3v-1h3v1h22v-2h1v2h2v-1h1v1h12v-1h3v1h2v-1h2v1h2v-1h1v1h7v-1h1v1h9v-1h2v1h11v-1h2v1h7v-1h2v2h12v-1h2v1h4v-1h2v1h8v-1h1v1h5v-1h2v1h12v-1h1v1h5v-1h1v1h5v-1h1v1h15v-1h2v1h32v-1h1v1h1v-1h2v1h6v-1h1v1h10v-1h2v1h6v-1h2v1h1v-1h4v1h2v-1h1v1h2v-1h1v1h1v-1h3v1h10v-1h2v1h4v-1h1v1h1v-1h1v1h59v-1h3v1h8v-1h4v1h2v-1h1v1h1v-1h1v1h14v-1h2v1h1v3h-3v1h-6v-1h-2v1h-1v-1h-2v1h-2v-1h-9v1h-3v-1h-3v1h-1v-1h-6v1h-1v-1h-30v1h-1v-1h-14v1h-1v-1h-2v1h-1v-1h-9v1h-2v-1h-3v1h-4v-1h-1v1h-4v-1h-4v1h-1v-1h-2v1h-3v1h-1v-1h-5v-1h-1v1h-1v-1h-4v1h-2v-1h-1v1h-2v-1h-3v1h-1v-1h-8v1h-4v-1h-4v1h-1v-1h-30v1h-2v-1h-1v1h-4v-1h-6v1h-3v-1h-3v1h-1v-1h-2v1h-1v-1h-14v1h-2v-1h-5v1h-1v-1h-1v1h-1v-1h-4v1h-1v-1h-3v1h-2v-1h-2v1h-2v-1h-1v-1h-2v1h-2v1h-2v-1h-14v-1h-4v1h-2v-1h-8v1h-1v-1h-8v1h-4v-1h-7v1h-2v-1h-20v1h-2v-1h-7v3h-1v-3h-3v1h-2v-1h-6v1h-2v-1h-3v1h-3v-1h-5v1h-3v-1h-2v1h-2v-1h-2v1h-2v-1h-6v1h-1v1h-2v-1h-2v1h-1v-2h-3v1h-2v-1h-2v1h-4v-1h-10v1h-9v1h-2v-1h-1v1h-2v-1h-1v-1h-3v1h-13v1h-2v-1h-8v1h-2v-1h-4v1h-1v-1h-4v1h-1v-1h-2v1h-2v-1h-1v1h-1v-1h-15v-1h-11v1h-1v1h-2v-1h-3v1h-2v-1h-5v-1h-7v1h-2v-1h-6v1h-2v-1h-17v1h-2v-1h-4v1h-2v-1h-17v1h-5v-1h-2v1h-1v-1h-22v1h-1v-1h-4v1h-2v-1h-4v1h-2v-1h-1v1h-2v-1h-3v1h-1v-1h-8v1h-1v-1h-7v1h-1v-1h-6v1h-2v-1h-2v1h-2v-1h-3v1h-1v-1h-3v1h-1v-1h-2v2h-1v-1h-1v-1h-7v1h-2v-1h-1v1h-2Z"/>
<path fill="#ff0000" d="M908 290h7v-1h2v1h3v-2h1v2h9v-1h1v1h1v-1h2v1h2v-1h5v1h2v-1h1v1h1v-1h1v1h2v-1h9v1h10v-1h2v-1h1v1h7v-1h1v1h1v-1h2v1h6v-1h1v1h12v-1h2v1h21v-1h3v1h15v1h2v-1h2v-1h2v1h6v-1h1v1h8v-1h2v1h4v-1h2v1h30v1h4v-1h1v1h1v-1h1v1h2v-1h2v1h30v-1h1v1h9v-1h1v1h15v-1h2v1h11v-1h1v1h18v-1h3v1h8v-1h2v1h1v-1h1v1h8v-1h2v1h5v-1h3v1h3v-3h1v3h2v-1h1v1h5v-1h1v1h12v-1h2v1h7v-1h3v1h13v-1h7v-1h2v1h5v1h14v-1h5v-1h2v1h12v-1h1v1h8v-1h2v1h8v-1h2v1h2v-1h2v1h4v-1h2v1h2v-1h2v1h1v-1h2v1h10v-1h1v1h15v-1h2v1h7v-1h1v1h10v-1h2v1h1v1h9v-1h1v-1h1v1h3v-1h1v1h7v-1h2v1h3v1h2v-1h3v1h1v-1h1v-1h1v2h2v-1h3v-1h1v1h7v-1h2v2h2v-1h1v1h12v-1h1v1h4v-1h1v1h2v-1h2v1h4v-1h2v1h4v-1h2v1h6v-1h2v1h11v-1h1v1h8v-1h1v1h21v-1h2v1h5v-1h4v1h7v-1h2v5h-1v-1h-5v1h-1v-1h-12v1h-2v-1h-1v1h-4v-1h-7v1h-1v-1h-2v1h-2v-1h-1v1h-2v-1h-1v1h-2v-1h-11v1h-2v-1h-2v1h-3v-1h-3v1h-1v-1h-18v1h-3v-1h-3v1h-1v-1h-6v1h-2v-1h-4v1h-2v-1h-2v-1h-9v1h-3v1h-1v-1h-1v1h-1v-1h-9v-1h-9v1h-2v-1h-1v1h-2v-1h-2v1h-1v1h-1v-1h-5v1h-2v-1h-2v-1h-5v1h-2v-1h-7v1h-1v-1h-6v1h-1v-1h-4v1h-1v-1h-1v1h-2v-1h-2v1h-1v-1h-15v1h-1v-1h-4v1h-3v-1h-1v1h-1v-1h-6v1h-1v-1h-7v1h-2v-1h-10v1h-2v-1h-4v1h-3v-1h-6v1h-2v-1h-4v1h-3v1h-4v-1h-8v-1h-9v1h-2v-1h-2v1h-11v1h-2v-1h-6v1h-1v-1h-2v1h-2v-1h-8v1h-2v-1h-5v1h-1v-1h-5v2h-1v-2h-14v1h-1v-1h-5v1h-1v-1h-9v1h-1v-1h-6v1h-2v-1h-2v1h-2v-1h-20v1h-1v-1h-4v1h-1v-1h-17v1h-3v-1h-4v1h-2v-1h-3v1h-2v-1h-12v1h-3v-1h-14v1h-1v-1h-1v1h-2v-1h-2v1h-1v-1h-4v1h-1v-1h-2v-1h-2v1h-3v-1h-6v1h-2v-1h-6v1h-2v-1h-4v1h-1v-1h-6v1h-2v-1h-7v1h-2v-1h-7v1h-2v-1h-3v1h-1v-1h-1v1h-4v-1h-14v1h-5v-1h-6v1h-1v-1h-1v1h-2v-1h-2v1h-2v-1h-6v1h-3v-1h-2v1h-1v-1h-9v1h-1v-1h-10v2h-1v-1h-8v1h-4v-1h-10v1h-1v-1h-2v1h-3v-1h-2v1h-2v-1h-1v1h-1v-1h-4v1h-1v-1h-5v2h-1v-2h-9v1h-2v-1h-2Z"/>
<path fill="#e36b0a" d="M908 310h6v-1h1v1h5v-2h1v2h7v-1h1v1h8v-1h1v1h7v-1h2v1h5v-1h1v1h6v-1h18v-1h1v1h3v-1h1v1h6v-1h2v1h4v-1h1v1h2v-1h2v1h10v-1h2v1h3v-1h1v1h1v-1h2v1h10v-1h1v1h5v-1h2v1h4v-1h1v1h4v-1h1v1h1v-1h1v1h6v-1h2v1h18v-1h1v1h1v-1h1v1h7v-1h2v1h4v-1h3v1h4v-1h1v1h10v-1h1v1h12v-1h2v1h3v-1h1v1h38v-1h2v1h40v-1h2v1h1v-1h3v1h8v-1h4v1h4v-1h2v1h4v-2h1v2h12v-1h1v1h5v-1h2v1h8v-1h2v1h13v-1h2v1h7v-1h2v1h14v-1h2v1h7v-1h2v1h11v-1h3v1h5v-1h1v1h5v-1h2v1h4v-1h2v1h2v-1h1v1h10v-1h19v1h5v-1h2v1h5v-1h1v1h11v-1h1v1h2v-1h2v1h1v-1h2v1h1v-1h1v1h3v-1h1v1h2v-1h1v1h15v-1h3v1h11v-1h1v1h2v-1h1v-1h1v1h6v-1h1v1h2v1h8v-1h2v1h11v-1h2v1h3v-1h1v1h8v-1h2v1h2v-1h2v1h3v-1h2v1h9v-1h1v1h18v-1h2v1h1v-1h1v1h2v-1h3v-1h1v1h11v1h2v-1h12v4h-1v-1h-6v1h-2v-1h-3v1h-5v1h-1v-1h-1v-1h-5v1h-2v-1h-3v1h-4v1h-4v-1h-21v1h-1v-1h-6v1h-4v-1h-36v1h-2v-1h-4v-1h-2v1h-2v-1h-4v1h-2v1h-1v-1h-4v1h-2v-1h-9v1h-2v-1h-3v1h-2v-1h-2v1h-1v-1h-9v1h-3v-1h-12v1h-2v-1h-8v1h-1v-1h-11v-1h-2v1h-1v-1h-5v1h-1v-1h-9v1h-9v1h-2v-1h-4v1h-2v-1h-5v1h-2v-1h-4v1h-1v-1h-8v1h-2v-1h-6v1h-2v-1h-2v1h-1v-1h-5v1h-2v-1h-5v1h-1v-1h-8v1h-2v-1h-1v1h-2v-1h-1v1h-1v-1h-5v1h-2v-1h-2v1h-2v-1h-1v1h-2v-1h-1v1h-2v-1h-1v1h-1v-1h-12v1h-3v-1h-4v1h-3v-1h-1v1h-4v-1h-1v2h-1v-2h-5v1h-1v-1h-15v1h-2v-1h-8v1h-2v-1h-2v1h-1v-1h-20v1h-2v-1h-7v1h-2v-1h-3v1h-2v-1h-1v1h-3v-1h-1v1h-1v-1h-5v1h-2v-1h-17v1h-2v-1h-11v1h-1v-1h-2v1h-2v-1h-3v1h-1v-1h-10v1h-2v-1h-9v1h-1v-1h-12v1h-2v-1h-9v1h-2v-1h-10v1h-2v-1h-7v1h-1v-1h-10v1h-2v-1h-6v1h-5v-1h-3v1h-1v-1h-4v1h-1v-1h-4v1h-1v-1h-6v1h-1v-1h-8v1h-2v-1h-5v1h-2v-1h-20v1h-2v-1h-3v1h-2v1h-2v-1h-8v1h-2v-1h-1v1h-1v-1h-3v1h-2v-1h-2v1h-1v-1h-3v1h-1v-1h-2v1h-2v-1h-5v2h-1v-2h-1v1h-1v-1h-11Z"/>
<path fill="#d99694" d="M908 326h1v-1h2v1h9v-2h1v2h6v-1h1v1h23v-1h1v1h4v-1h2v1h7v-1h2v1h3v-1h3v1h12v-1h2v1h9v-2h1v1h8v-1h2v1h3v-1h2v1h5v-1h1v1h8v-1h2v1h6v-1h1v1h17v-1h1v1h1v-1h2v1h4v-1h2v1h6v-1h2v1h3v-1h2v1h4v-1h2v1h6v-1h2v1h3v-1h1v1h2v-1h2v1h1v-1h5v1h9v-1h3v1h2v-1h1v1h4v-1h1v1h1v-1h1v1h7v-1h1v1h2v-1h2v1h1v-1h1v1h15v-1h2v2h8v-1h14v1h11v-1h2v1h5v-1h6v-1h2v1h2v-1h4v1h9v-1h2v1h2v-1h2v1h8v-1h1v1h1v-2h1v2h4v-1h1v1h2v-1h2v1h2v-1h1v1h2v-1h3v1h4v-1h2v1h8v-1h1v1h6v-1h2v1h33v-1h10v-1h1v1h4v-1h2v1h3v-1h2v1h4v-1h1v1h6v-1h2v1h4v-1h1v1h4v-1h3v1h8v-1h2v1h7v-1h1v1h10v-1h1v1h21v-1h1v1h1v-1h2v1h3v-1h2v1h1v-1h1v1h7v-1h2v1h2v-1h2v1h2v-1h2v1h10v-1h1v1h3v-1h6v1h10v-1h1v1h4v-1h1v1h1v-1h1v1h1v1h7v-2h2v1h18v-1h1v1h12v-1h2v1h26v-1h1v1h3v-1h2v1h3v-1h1v1h6v-1h1v1h1v-1h2v1h12v3h-7v1h-2v-1h-22v1h-1v-1h-6v1h-2v-1h-4v1h-5v-1h-2v1h-2v-1h-20v1h-1v-1h-2v1h-1v-1h-4v1h-2v-1h-8v1h-1v-1h-1v1h-7v-1h-3v1h-2v-1h-1v1h-1v-1h-14v2h-1v-1h-1v-1h-17v1h-2v-1h-11v1h-2v-1h-2v1h-2v-1h-2v1h-3v-1h-2v1h-2v-1h-2v1h-4v-1h-5v1h-2v-1h-6v1h-1v-1h-6v1h-1v-1h-2v1h-2v-1h-3v1h-1v-1h-7v1h-1v-1h-9v1h-1v-1h-4v1h-1v-1h-1v1h-1v-1h-2v1h-1v-1h-4v1h-4v-1h-2v1h-1v-1h-8v1h-1v-1h-2v1h-1v-1h-8v1h-1v-1h-1v1h-2v1h-2v-1h-5v1h-1v-1h-5v1h-1v-1h-2v1h-1v-1h-1v1h-1v-1h-12v1h-2v-1h-1v1h-1v-1h-8v1h-2v-1h-12v1h-3v-1h-2v1h-1v-1h-7v2h-1v-2h-5v1h-4v-1h-23v1h-2v-1h-3v1h-1v-1h-2v1h-1v1h-2v-1h-14v1h-3v-1h-1v-1h-4v1h-1v-1h-1v1h-2v-1h-1v1h-10v-1h-6v1h-2v-1h-4v1h-1v-1h-11v1h-1v-1h-8v1h-2v-1h-8v1h-3v-1h-7v1h-3v-1h-7v1h-1v-1h-16v1h-1v-1h-1v1h-2v-1h-3v1h-6v-1h-4v1h-2v-1h-11v1h-1v-1h-5v1h-1v-1h-9v1h-2v-1h-1v1h-2v-1h-3v1h-2v-1h-5v1h-2v-1h-15v1h-7v1h-4v-1h-26v1h-1v-1h-7v1h-1v-1h-2v1h-1v-1h-2v1h-1v-1h-15v1h-1v-1h-8v2h-1v-2h-3v1h-2v-1h-3v1h-5Z"/>
<path fill="#91d14f" d="M908 349h12v-2h1v2h39v-1h1v1h3v-1h3v1h6v-1h2v1h1v-1h2v1h3v-1h2v1h5v-1h1v1h11v-1h2v1h5v-1h6v1h2v-1h2v1h2v-1h4v1h4v-2h1v1h5v-1h2v1h5v1h19v-1h1v1h2v-1h1v1h4v-1h1v1h2v-1h2v1h11v-1h3v1h10v-1h1v1h3v-1h2v1h5v-1h4v1h2v-1h3v1h2v-1h1v1h2v-1h5v1h11v-1h2v1h14v-1h1v1h1v-1h1v1h4v-1h2v1h1v-1h2v1h10v-1h2v1h26v-1h2v1h17v-1h1v1h4v-1h2v1h1v-1h2v1h1v-1h1v1h1v-2h1v2h14v-1h3v1h12v-1h1v1h2v-1h4v1h1v-1h1v1h25v-1h2v1h10v-1h3v1h1v-1h1v1h6v-1h2v1h1v-1h2v1h14v-1h2v1h5v-1h4v1h4v-1h3v1h14v-1h2v1h4v-1h4v1h1v-1h4v1h2v-1h3v1h8v-1h3v1h5v-1h1v1h16v-1h3v1h12v-1h1v1h4v-1h2v1h2v-2h1v2h9v-1h4v1h1v-1h2v1h6v-1h2v1h3v-1h1v1h2v-1h2v1h4v-1h1v1h10v-1h3v1h17v-1h3v1h21v-1h2v1h1v-1h1v1h13v-1h2v1h1v-1h1v1h9v-1h1v4h-3v1h-2v-1h-1v1h-1v-1h-15v1h-2v-1h-3v1h-2v-1h-5v1h-2v-1h-2v1h-2v-1h-2v1h-2v-1h-7v1h-1v-1h-7v1h-2v-1h-4v1h-2v-1h-5v1h-1v-1h-2v1h-1v-1h-16v1h-2v-1h-5v1h-2v-1h-20v1h-3v-1h-1v1h-2v-1h-3v1h-2v-1h-1v1h-1v-1h-11v1h-1v-1h-5v1h-1v-1h-8v1h-1v-1h-5v1h-2v-1h-4v1h-1v-1h-13v1h-1v-1h-1v1h-2v-1h-13v1h-2v-1h-2v1h-2v-1h-36v1h-1v-1h-1v1h-2v-1h-1v1h-2v-1h-12v1h-2v-1h-24v1h-1v-1h-11v1h-1v-1h-2v1h-1v-1h-3v1h-1v-1h-1v1h-1v-1h-7v1h-4v-1h-11v1h-1v-1h-1v2h-1v-2h-2v1h-1v-1h-10v1h-1v-1h-5v1h-3v-1h-14v1h-1v-1h-10v1h-3v-1h-8v1h-1v-1h-9v1h-2v-1h-7v1h-1v-1h-10v1h-4v-1h-5v1h-3v-1h-1v1h-1v-1h-36v1h-1v-1h-16v1h-2v-1h-2v1h-5v-1h-2v1h-1v-1h-9v1h-2v-1h-19v-1h-11v1h-13v1h-2v-1h-7v1h-5v-1h-21v1h-1v-1h-5v1h-5v-1h-2v1h-1v-1h-7v1h-1v-1h-2v1h-2v-1h-4v1h-1v-1h-1v1h-4v-1h-1v1h-2v-1h-4v1h-3v-1h-12v2h-1v-2h-2v1h-4v-1h-7Z"/>
<path fill="#00b0f0" d="M908 365h10v-1h2v-2h1v3h18v-1h1v1h8v-1h2v1h1v-1h2v1h17v-1h4v1h2v-1h1v1h1v-1h1v1h17v-1h2v1h3v-1h3v1h8v-1h2v1h1v-1h1v1h9v-1h1v1h10v-1h2v1h3v-1h2v1h18v-1h2v-1h1v1h1v-1h3v1h4v-1h1v1h1v-1h2v1h5v-1h1v1h7v-1h1v1h4v-1h1v1h8v-1h2v1h2v-1h3v1h2v-1h4v1h7v-1h1v1h12v-1h1v1h5v-1h3v1h6v-1h3v1h23v-1h1v1h4v-1h2v1h6v-1h1v1h4v-1h2v1h10v-1h1v1h1v-1h2v1h2v-1h1v1h9v-1h1v1h2v-1h2v1h7v-2h1v2h1v-1h2v1h1v-1h1v1h1v-1h2v1h13v-1h1v1h1v1h1v-1h1v1h5v-1h1v1h1v-1h2v-1h2v1h6v1h13v-1h1v1h2v-1h2v1h2v-1h3v-1h2v1h4v-1h1v1h1v-1h4v1h12v-1h2v1h3v-1h6v1h6v-1h1v1h5v-1h1v1h2v-1h1v1h3v-1h1v1h5v-1h1v1h10v-1h2v1h2v-1h1v1h1v-1h1v1h19v-1h1v1h1v-1h2v1h8v-1h1v1h3v-1h2v1h1v-1h1v1h4v-1h1v1h1v-1h2v1h4v-1h2v1h7v-1h1v-1h1v1h2v-1h2v1h3v-1h3v1h8v1h6v-1h11v-1h3v1h8v-1h2v1h8v-1h1v1h4v-1h2v1h5v-1h1v1h1v-1h4v1h6v-1h2v1h2v-1h1v1h14v1h3v-1h2v1h16v-1h1v1h11v3h-7v1h-3v-1h-6v1h-2v-1h-2v1h-2v-1h-2v1h-2v-1h-3v1h-2v-1h-2v-1h-3v1h-1v-1h-4v1h-4v-1h-4v1h-2v-1h-23v1h-1v-1h-6v1h-3v-1h-1v1h-2v-1h-16v1h-3v-1h-1v1h-5v1h-1v-1h-1v-1h-7v1h-1v-1h-8v1h-2v-1h-1v1h-29v1h-5v-1h-3v1h-2v-1h-4v1h-2v-1h-8v1h-1v-1h-6v1h-2v-1h-4v1h-3v-1h-7v1h-2v-1h-7v1h-1v-1h-11v1h-2v-1h-2v1h-2v-1h-17v1h-2v-1h-20v1h-4v1h-2v-1h-3v1h-2v-1h-9v-1h-2v1h-2v-1h-4v1h-5v1h-2v-1h-5v-1h-12v1h-2v-1h-7v3h-1v-2h-1v-1h-4v1h-2v-1h-23v1h-2v-1h-6v1h-1v-1h-1v1h-1v-1h-20v1h-1v-1h-3v1h-2v-1h-18v1h-4v-1h-3v1h-1v-1h-11v1h-3v-1h-3v1h-2v-1h-4v1h-1v-1h-10v1h-1v-1h-12v1h-3v-1h-7v1h-2v-1h-2v1h-2v-1h-17v1h-2v1h-2v-1h-13v1h-4v-1h-10v1h-4v-1h-9v1h-1v-1h-13v1h-1v-1h-6v1h-4v-1h-1v1h-3v-1h-2v1h-1v-1h-7v1h-2v-1h-4v1h-1v-1h-25v1h-2v-1h-7v1h-2v-1h-6v1h-2v-1h-4v1h-1v-1h-2v2h-1v-2h-8v1h-2v-1h-1v1h-2Z"/>
<path fill="#ff0066" d="M908 385h5v-1h2v1h5v-2h1v2h5v-1h1v1h3v-1h1v1h17v-1h1v1h21v-1h1v1h41v-1h2v1h12v-1h2v1h2v-1h2v1h1v-1h2v1h6v-1h2v1h4v-1h2v1h1v-1h2v1h11v-1h5v1h2v-1h2v1h1v-1h1v1h7v-1h1v1h4v-1h2v1h6v-1h2v1h20v-1h1v1h7v-1h2v1h4v-1h2v1h2v-1h4v-1h5v1h6v-1h2v1h17v-1h2v1h1v-1h2v1h12v-1h1v1h1v-1h1v1h1v-1h1v1h8v-1h3v1h15v-1h4v1h5v-1h4v1h6v-2h1v2h4v-1h1v1h14v-1h1v1h29v-1h1v1h2v-1h3v1h1v-1h2v1h5v-1h1v1h9v-1h2v1h16v-1h1v1h3v-1h3v1h9v-1h2v1h10v-1h3v1h5v-1h1v1h2v-1h2v1h5v-1h2v1h3v-1h1v1h6v-1h1v1h5v-1h1v1h16v-1h1v1h1v-1h1v1h11v-1h3v1h2v-1h1v1h15v-1h1v1h1v-1h1v1h4v-1h1v1h15v-1h2v1h1v-1h1v1h2v-1h3v1h12v-1h1v-1h1v1h2v-1h1v1h1v-1h2v1h7v-1h5v1h32v-1h1v1h29v-1h1v1h3v4h-3v-1h-1v1h-2v-1h-8v1h-8v-1h-32v1h-1v-1h-7v1h-2v-1h-1v1h-2v-1h-2v1h-1v-1h-15v1h-3v1h-1v-1h-9v1h-2v-1h-1v1h-2v-1h-2v1h-1v-1h-15v1h-1v-1h-17v1h-1v-1h-4v1h-2v-1h-6v1h-5v-1h-11v1h-1v-1h-2v1h-1v-1h-2v1h-3v-1h-4v1h-2v-1h-9v1h-2v-1h-1v1h-2v-1h-11v1h-1v-1h-14v1h-2v-1h-2v1h-1v-1h-4v1h-1v-1h-5v1h-1v-1h-1v1h-1v-1h-8v1h-3v-1h-3v1h-2v-1h-7v1h-4v-1h-13v1h-1v-1h-9v1h-2v-1h-5v1h-1v-1h-4v1h-1v-1h-1v1h-1v-1h-6v1h-2v-1h-20v1h-2v1h-1v-2h-16v1h-2v-1h-3v1h-2v-1h-1v1h-2v-1h-6v1h-1v-1h-1v1h-2v-1h-12v1h-1v-1h-2v1h-3v-1h-5v1h-2v-1h-3v1h-2v-1h-2v1h-2v-1h-6v1h-3v-1h-7v1h-2v-1h-2v1h-2v-1h-2v1h-2v-1h-4v1h-13v1h-2v-1h-8v1h-2v-1h-2v1h-1v-1h-4v1h-1v-1h-5v1h-1v-1h-2v1h-2v-1h-5v1h-2v-1h-3v1h-2v-1h-4v1h-2v-1h-6v1h-5v-1h-4v1h-1v-1h-10v1h-3v-1h-2v1h-1v-1h-3v1h-1v-1h-25v1h-2v-1h-2v1h-2v-1h-2v1h-1v-1h-4v1h-4v-1h-5v1h-1v-1h-5v1h-4v-1h-2v1h-4v-1h-3v1h-2v-1h-5v1h-1v-1h-6v1h-2v-1h-28v1h-2v-1h-3v1h-2v1h-1v-2h-6v1h-1v-1h-6Z"/>
<path fill="#00b04f" d="M908 402h6v-1h1v1h4v-1h1v-1h1v2h11v-1h1v1h2v-1h1v1h1v-1h4v1h14v-1h1v1h3v-1h2v1h1v-1h2v1h13v-1h4v1h1v-1h4v1h2v1h10v-1h13v-1h2v1h5v-1h1v1h14v-1h2v1h6v-1h2v1h15v-1h1v1h3v-1h2v1h7v1h5v-1h2v1h2v-1h1v1h4v-1h8v-1h2v1h3v-1h2v1h2v-1h2v1h6v-1h1v1h4v-1h2v1h2v-1h2v1h5v-1h1v1h4v-1h2v1h1v-1h1v1h3v-1h3v1h7v-1h1v1h2v-1h4v1h2v-1h1v1h3v-1h1v1h1v-1h2v1h4v-1h1v1h7v-1h1v1h1v-1h1v1h12v-1h2v1h9v-1h1v-1h1v1h2v-1h2v1h6v-1h2v1h18v-2h1v2h2v1h16v-1h4v1h11v-1h2v1h12v-1h2v1h6v-1h1v1h18v-1h2v1h1v-1h2v1h18v-1h3v1h9v-1h2v1h4v-1h1v1h1v-1h1v1h10v1h2v-1h1v1h6v-1h5v-1h2v1h4v-1h1v1h2v-1h1v1h13v-1h1v1h5v-1h1v1h2v-1h2v1h3v-1h2v1h10v-1h2v1h10v-1h4v1h7v-1h1v1h6v-1h1v1h8v-1h1v1h8v-1h4v1h8v-1h2v1h1v-1h14v-1h1v1h12v-1h1v1h7v-1h2v1h2v-1h2v1h2v-1h2v1h1v1h14v-1h2v1h12v-1h1v1h8v4h-1v-1h-3v1h-2v-1h-6v1h-1v-1h-7v1h-4v-1h-5v1h-1v-1h-7v-1h-4v1h-3v-1h-2v1h-1v-1h-5v1h-2v-1h-2v1h-1v-1h-2v1h-2v-1h-2v1h-2v-1h-18v1h-1v1h-3v-1h-12v1h-1v-1h-3v1h-1v-1h-7v1h-2v-1h-4v1h-2v-1h-1v1h-2v-1h-10v1h-1v-1h-5v1h-2v-1h-2v1h-2v-1h-5v1h-1v-1h-14v1h-1v-1h-12v1h-4v-1h-6v1h-3v-1h-1v1h-3v-1h-6v1h-6v1h-2v-1h-1v-1h-2v1h-2v-1h-11v1h-3v-1h-7v1h-5v-1h-1v1h-1v-1h-13v1h-2v-1h-12v1h-2v-1h-2v1h-1v-1h-18v1h-1v-1h-16v1h-1v-1h-4v1h-1v-1h-17v1h-2v-1h-2v-1h-1v2h-1v-2h-4v1h-2v-1h-24v1h-2v-1h-1v1h-6v1h-2v-1h-2v1h-1v-1h-21v1h-4v-1h-4v1h-1v-1h-1v1h-4v-1h-5v1h-2v-1h-2v1h-3v-1h-4v1h-2v-1h-8v1h-2v-1h-7v1h-1v-1h-3v1h-1v-1h-5v1h-3v-1h-23v1h-13v1h-1v-1h-1v-1h-11v1h-2v-1h-1v1h-1v-1h-9v1h-2v-1h-14v1h-1v-1h-4v1h-2v-1h-5v1h-1v-1h-1v1h-1v-1h-2v1h-2v-1h-7v1h-2v-1h-3v1h-9v1h-1v-1h-2v-1h-2v1h-1v-1h-16v1h-1v-1h-1v1h-1v-1h-4v1h-1v-1h-9v1h-1v-1h-11v1h-3v-1h-15v3h-1v-3h-11v1h-2Z"/>
<path fill="#0070bf" d="M908 416h4v-2h2v1h5v1h1v-2h1v2h5v-1h1v1h5v-1h3v1h3v-1h1v1h17v-1h2v1h28v-1h3v1h6v-1h2v1h10v-1h1v1h9v-1h2v1h13v-1h1v1h1v-1h3v1h6v-1h1v1h3v-1h2v1h1v-1h1v1h5v-1h1v1h5v-1h2v1h5v-1h1v1h3v-1h1v1h5v-1h2v1h4v-1h1v1h7v-1h3v1h2v-1h2v1h1v-1h1v1h22v-1h2v1h13v-1h2v1h1v-1h2v1h1v-1h1v1h3v-1h1v1h7v-1h2v1h4v1h4v-1h3v-1h2v1h12v1h18v-1h2v-1h1v1h1v1h2v-1h1v1h3v-1h2v1h7v-1h1v1h7v-1h6v-1h1v2h24v-1h2v1h9v-1h1v1h8v-1h2v1h5v-1h2v1h1v-1h1v1h1v-1h2v1h4v-1h2v1h2v-1h2v1h1v-1h2v1h3v-1h2v1h3v-1h2v1h1v-1h1v1h15v-1h2v2h2v-1h1v-1h3v1h2v-1h2v1h3v-1h2v1h9v-1h1v1h3v-1h1v1h3v-1h1v1h3v-1h1v1h19v-1h2v1h9v-1h2v1h3v-1h2v1h37v1h3v-1h1v1h9v-1h2v-1h1v1h10v1h18v-1h3v-1h2v1h2v1h9v-1h1v1h7v-1h2v1h9v-1h2v1h34v-1h4v1h7v4h-3v-1h-2v1h-1v-1h-3v1h-1v-1h-14v1h-1v-1h-31v1h-1v-1h-2v1h-2v-1h-10v1h-2v-1h-4v-1h-3v1h-1v-1h-1v1h-18v-1h-12v1h-1v1h-1v-1h-3v1h-1v-1h-3v1h-2v-1h-4v1h-1v-2h-3v1h-3v-1h-1v1h-2v-1h-7v1h-1v-1h-15v1h-2v-1h-8v1h-3v-1h-1v1h-2v-1h-2v1h-2v-1h-2v1h-1v-1h-13v1h-2v-1h-6v1h-2v-1h-1v1h-1v-1h-12v1h-2v-1h-5v1h-2v-1h-1v1h-3v-1h-2v1h-3v-1h-6v1h-3v-1h-9v1h-3v-1h-1v1h-1v-1h-1v1h-1v-1h-18v1h-3v-1h-6v1h-1v-1h-15v1h-1v-1h-26v1h-1v-1h-2v3h-1v-3h-33v-1h-1v1h-20v-1h-1v1h-1v-1h-7v1h-1v-1h-5v1h-1v1h-2v-1h-3v-1h-5v1h-2v-1h-4v1h-2v-1h-8v1h-2v-1h-6v1h-2v-1h-4v1h-2v-1h-6v1h-2v-1h-12v1h-4v-1h-7v1h-4v-1h-2v1h-1v-1h-8v1h-3v-1h-7v1h-1v-1h-2v1h-2v-1h-2v1h-4v-1h-2v1h-1v-1h-4v1h-1v-1h-2v1h-1v-1h-1v1h-1v-1h-5v1h-1v-1h-4v1h-2v-1h-4v1h-1v-1h-8v1h-2v-1h-1v1h-2v-1h-1v1h-1v-1h-2v1h-2v-1h-8v1h-1v-1h-1v1h-4v-1h-1v1h-2v-1h-7v1h-3v-1h-6v1h-2v-1h-2v1h-1v-1h-6v1h-2v-1h-19v1h-1v-1h-3v1h-2v-1h-4v1h-1v-1h-1v1h-1v-1h-4v1h-4v2h-1v-3h-4v-1h-5v1h-4Z"/>
<path fill="#bf0000" d="M908 446h11v-1h1v-2h1v3h4v-1h2v1h1v-1h1v1h2v-1h6v1h7v-1h1v1h2v-1h2v1h2v-1h2v1h9v-1h1v1h2v-1h2v1h9v-1h1v1h4v-1h2v1h4v-1h2v1h5v-1h2v1h2v-1h2v1h2v-1h1v1h1v1h2v-1h4v1h2v-1h1v1h3v-1h1v1h2v-1h2v1h6v-1h2v1h7v-1h1v1h2v-1h2v1h2v-1h1v1h9v-1h1v1h17v-1h2v1h11v-1h3v1h1v-1h1v1h9v-1h1v1h12v-1h2v1h1v-1h1v1h4v-1h1v1h2v-1h1v1h6v-1h2v1h4v-1h2v1h8v-1h2v1h15v-1h2v1h1v-1h1v1h9v-1h1v1h1v-1h1v1h2v-1h1v1h1v-1h2v1h15v-1h1v1h2v-1h2v1h12v-1h2v1h2v-1h2v1h6v-1h2v1h3v-1h1v1h1v-2h1v2h2v-2h1v1h3v-1h2v1h6v-1h2v1h17v-1h1v1h2v-1h4v1h5v-1h2v1h7v-1h2v1h14v-1h1v1h3v1h9v-1h2v1h3v-1h2v1h1v-1h2v1h11v-1h1v1h5v-1h2v1h3v-1h2v1h6v-1h5v1h7v-1h1v1h2v-1h1v1h3v-1h2v1h2v-1h1v1h3v-1h2v1h43v-1h1v1h2v-1h2v1h9v-1h1v1h4v-1h5v1h2v-1h1v1h20v-1h3v1h2v-1h4v1h7v-1h1v1h8v-1h1v1h1v-1h1v1h2v-1h1v1h8v-1h1v1h4v-1h4v1h4v-1h2v1h1v-1h3v1h13v-1h1v1h2v-1h2v1h19v3h-6v1h-1v-1h-5v1h-2v-1h-4v1h-2v-1h-1v1h-2v-1h-8v1h-3v-1h-4v1h-1v-1h-13v1h-2v-1h-3v1h-3v-1h-5v1h-2v-1h-3v1h-2v-1h-1v1h-2v-1h-7v1h-2v-1h-2v1h-3v-1h-10v1h-2v-1h-4v1h-1v-1h-12v1h-1v-1h-2v1h-1v-1h-4v1h-2v-1h-2v1h-1v-1h-1v1h-2v-1h-1v1h-1v-1h-14v1h-1v-1h-29v1h-2v-1h-11v1h-1v-1h-2v1h-1v-1h-12v1h-4v-1h-6v1h-1v-1h-5v1h-1v-1h-5v1h-2v-1h-4v1h-2v-1h-15v1h-2v-1h-4v1h-2v-1h-3v-1h-3v1h-2v-1h-4v1h-3v-1h-3v1h-2v-1h-3v1h-2v-1h-7v1h-3v-1h-6v1h-2v-1h-2v1h-1v-1h-2v1h-1v-1h-5v1h-4v-1h-4v1h-3v-1h-7v1h-1v1h-1v1h-1v-2h-2v1h-4v-1h-6v1h-1v-1h-2v1h-2v-1h-6v1h-4v-1h-3v1h-2v-1h-8v1h-1v-1h-3v1h-1v-1h-2v1h-1v-1h-3v1h-1v-1h-13v1h-2v-1h-9v1h-3v-1h-2v1h-2v-1h-6v1h-1v-1h-3v1h-1v-1h-8v1h-1v-1h-2v1h-1v-1h-8v1h-2v-1h-4v1h-1v-1h-18v1h-2v-1h-7v1h-2v-1h-29v1h-2v-1h-2v1h-1v-1h-23v1h-1v-1h-7v1h-2v-1h-3v1h-1v-1h-5v1h-3v-1h-2v1h-2v-1h-1v-1h-1v1h-4v-1h-5v1h-2v-1h-2v1h-1v-1h-6v1h-2v-1h-19v1h-1v-1h-5v1h-1v-1h-20v1h-2v-1h-5v1h-3v-1h-1v2h-1v-2h-3v1h-1v-1h-5v1h-2v-1h-2Z"/>
<path fill="#0000ff" d="M908 461h6v-1h1v1h5v-2h1v2h7v-1h12v1h7v-1h2v1h9v-1h11v-1h1v1h5v1h3v-1h21v-1h2v1h3v-1h2v1h7v-1h1v1h4v-1h2v1h9v-1h2v1h2v1h1v-1h6v1h2v-1h14v-1h2v2h1v-1h2v1h2v-1h1v1h1v-1h2v1h2v-2h1v1h3v-1h6v1h7v-1h3v1h1v-1h1v1h7v-1h2v1h12v-1h1v1h11v-1h2v1h23v-1h3v1h17v-1h2v1h6v-1h1v1h1v-1h1v1h9v-1h1v1h2v-1h11v-1h1v1h8v-1h2v1h3v-1h2v1h11v-1h1v1h4v-2h1v2h2v-1h1v1h5v-1h2v1h15v-1h1v1h8v-1h1v1h5v-1h2v1h1v-1h1v1h7v-1h4v1h11v-1h1v1h5v-1h1v1h13v-1h4v1h5v-1h1v1h5v-1h2v1h19v-1h1v1h9v-1h1v1h4v-1h2v1h3v-1h2v1h12v-1h5v1h9v-1h2v1h8v-1h1v1h14v-1h2v1h17v-1h1v1h8v-1h1v1h2v-1h1v1h2v-1h2v1h2v-1h3v1h6v-1h6v-1h2v1h8v-1h1v1h18v-1h1v1h4v-1h2v1h1v-1h1v1h15v-1h2v1h7v-1h2v1h1v-1h1v1h11v-1h1v1h5v-1h1v1h1v-1h2v1h2v4h-1v-1h-2v1h-1v-1h-11v1h-2v-1h-5v1h-4v-1h-2v1h-1v-1h-4v1h-1v-1h-2v1h-2v-1h-7v1h-2v-1h-6v1h-2v-1h-2v1h-1v-1h-10v1h-1v-1h-12v1h-1v-1h-7v1h-2v-1h-2v1h-1v-1h-1v1h-1v1h-2v-1h-1v1h-2v-1h-13v1h-1v-1h-6v1h-1v-1h-12v1h-1v-1h-5v1h-5v-1h-2v1h-1v-1h-2v1h-1v-1h-3v1h-1v-1h-2v1h-2v-1h-4v1h-1v-1h-1v1h-3v-1h-9v1h-2v-1h-4v1h-3v-1h-3v1h-4v-1h-24v1h-1v-1h-1v1h-1v-1h-3v1h-2v-1h-20v1h-1v-1h-1v1h-1v-1h-10v1h-5v-1h-1v1h-2v-1h-5v1h-1v-1h-6v1h-1v-1h-40v1h-1v-1h-7v1h-2v-1h-2v1h-5v1h-1v-2h-16v1h-2v-1h-8v1h-1v-1h-4v1h-3v-1h-1v1h-2v-1h-7v1h-3v1h-1v-1h-9v1h-1v-1h-4v1h-3v-1h-6v1h-2v-1h-6v1h-3v-1h-3v1h-2v-1h-3v1h-5v-1h-6v1h-4v-1h-2v1h-1v-1h-12v1h-2v-1h-3v1h-1v-1h-2v1h-1v-1h-2v1h-2v-1h-3v1h-1v-1h-2v1h-2v-1h-3v1h-1v-1h-1v1h-2v-1h-6v1h-2v-1h-4v1h-2v-1h-4v1h-1v1h-1v-1h-1v1h-3v-1h-4v1h-1v-1h-1v-1h-3v1h-1v-1h-2v1h-1v-1h-9v1h-9v-1h-6v1h-1v-1h-2v1h-1v-1h-6v1h-4v-1h-1v1h-4v-1h-4v1h-1v-1h-17v1h-3v-1h-5v1h-3v-1h-15v1h-2v1h-1v-1h-11v1h-2v-1h-4v-1h-11v1h-2v1h-1v-1h-4v2h-1v-2h-6v1h-4v-1h-3Z"/>
<path fill="#00ff00" d="M908 480h3v-1h1v1h8v-3h1v3h6v-1h1v1h1v-1h2v1h7v-1h1v1h26v-1h2v1h3v-1h4v-1h2v1h4v-1h1v1h2v-1h6v1h2v-1h1v1h1v-1h2v1h2v-1h2v1h4v-1h2v1h5v-1h2v1h8v-1h2v1h29v-1h2v1h15v-1h1v1h14v-1h1v1h10v-1h1v1h2v-1h2v1h9v-1h2v1h1v-1h1v1h1v-1h2v1h3v-1h4v1h5v-1h2v1h6v-1h2v1h4v-1h2v1h4v-1h1v1h11v-1h1v1h2v-1h2v1h7v-1h1v1h2v-1h2v1h6v-1h1v1h11v-1h4v1h2v-1h1v1h4v-1h2v1h1v-1h2v1h6v-1h1v1h1v-1h1v1h16v-2h1v2h3v-1h4v1h11v-1h3v-1h1v1h8v-1h1v1h2v-1h2v1h2v-1h2v1h13v-1h1v1h6v-1h2v1h37v-1h2v1h4v-1h2v1h2v-1h1v1h5v-1h15v-1h2v1h6v-1h1v1h9v-1h1v1h4v1h14v-1h1v1h1v-1h1v1h6v-1h1v1h5v-1h1v1h5v-1h9v-1h2v1h16v-2h1v2h2v-1h1v1h3v-1h2v1h10v-1h2v1h9v-1h2v1h2v-1h4v1h7v-1h1v1h2v1h14v-1h1v1h3v-1h25v-1h4v1h6v-1h2v1h11v-1h2v1h1v-1h1v1h4v-1h1v4h-3v1h-2v-1h-8v1h-3v-1h-2v1h-1v-1h-4v1h-2v-1h-1v1h-1v-1h-1v1h-1v-1h-8v1h-2v-1h-1v1h-2v-1h-13v1h-1v-1h-1v1h-2v1h-2v-1h-3v1h-1v-1h-2v1h-1v-1h-6v1h-1v-1h-1v-1h-6v1h-2v-1h-2v1h-1v-1h-1v1h-1v-1h-4v1h-1v-1h-9v1h-2v-1h-6v1h-2v-1h-3v1h-3v-1h-2v1h-1v-1h-2v1h-1v-1h-2v1h-1v-1h-22v1h-7v1h-3v-1h-10v1h-2v-1h-9v1h-2v-1h-2v-1h-3v1h-4v-1h-7v1h-2v-1h-3v1h-1v-1h-3v1h-2v-1h-2v1h-3v-1h-2v1h-3v-1h-3v1h-6v1h-1v-1h-6v1h-3v-1h-27v1h-4v-1h-13v1h-2v-1h-20v1h-2v-1h-1v1h-2v-1h-9v1h-7v1h-3v-1h-2v1h-2v-1h-3v2h-1v-2h-5v1h-2v-1h-11v1h-1v-1h-13v1h-1v-1h-5v1h-1v-1h-30v1h-1v-1h-3v1h-1v-1h-29v1h-1v-1h-17v1h-1v-1h-10v1h-1v-1h-1v1h-2v-1h-3v1h-3v-1h-3v1h-2v-1h-9v1h-2v-1h-3v1h-1v-1h-4v1h-2v-1h-2v1h-2v-1h-13v1h-2v-1h-16v1h-3v-1h-2v1h-1v-1h-4v1h-2v-1h-1v1h-1v-1h-4v1h-1v-1h-2v1h-4v-1h-2v1h-2v-1h-9v1h-3v-1h-2v1h-4v-1h-1v1h-1v-1h-2v1h-4v-1h-5v1h-3v1h-1v-1h-3v1h-3v-1h-11v1h-1v-1h-3v1h-2v-1h-10v1h-2v-1h-9v1h-3v1h-1v-2h-1v1h-1v-1h-6v1h-2v-1h-3Z"/>
<path fill="#7030a0" d="M908 489h3v-1h2v1h3v-1h2v1h2v-3h1v3h3v-1h1v1h54v-1h1v1h2v-1h2v1h47v-1h2v1h12v-1h1v1h3v-1h2v1h1v-1h2v1h8v-1h1v1h9v-1h1v1h3v-1h1v1h5v-1h1v1h1v-1h2v1h4v-1h2v1h2v-1h1v1h3v-1h1v1h11v-1h9v1h1v-1h1v1h2v-1h1v1h2v-1h1v1h7v-1h1v1h3v-1h1v1h1v-1h3v1h4v-1h1v1h4v-1h1v1h2v-1h1v1h3v-1h1v1h2v-1h2v1h4v-1h4v1h6v-1h4v1h8v-1h2v1h5v-1h1v1h4v-1h2v1h3v-1h1v1h1v-1h1v1h17v-1h1v1h7v-2h1v1h3v1h6v-1h1v1h12v-1h1v1h4v-1h1v1h6v-1h2v1h13v-1h1v1h18v-1h1v1h6v-1h2v1h2v-1h4v1h6v-1h2v1h3v-1h3v1h10v-1h1v1h7v-1h2v-1h2v1h5v1h6v-1h1v1h10v-1h3v-1h2v1h6v1h2v-1h5v1h11v-1h4v-1h1v1h6v-1h2v1h4v1h5v-2h2v1h8v-1h4v1h2v-1h4v1h2v-1h1v1h2v-1h2v1h6v-1h2v1h12v-1h1v1h5v-1h2v1h2v-1h2v1h20v1h6v-1h2v1h4v-2h1v1h27v-1h2v1h3v-1h1v1h2v-1h2v1h6v-1h2v1h1v1h6v-1h1v4h-8v-1h-7v1h-4v-1h-4v1h-4v-1h-25v1h-12v1h-2v-1h-2v-1h-14v1h-1v-1h-25v1h-2v-1h-3v1h-1v-1h-3v1h-2v-1h-2v1h-1v-1h-8v1h-1v-1h-2v1h-2v-1h-4v1h-2v-1h-4v1h-8v-1h-13v1h-3v1h-1v-1h-5v1h-1v-1h-9v-1h-5v1h-1v-1h-5v1h-3v1h-2v-1h-4v1h-2v-1h-7v-1h-6v1h-2v1h-1v-1h-25v1h-2v-1h-14v1h-4v-1h-5v1h-1v-1h-9v1h-1v-1h-5v1h-5v-1h-3v1h-1v-1h-4v1h-4v-1h-1v1h-2v-1h-20v1h-2v-1h-5v2h-1v-2h-8v1h-1v-1h-2v1h-1v-1h-3v1h-2v-1h-6v1h-1v-1h-4v1h-4v-1h-8v1h-2v-1h-1v1h-1v-1h-3v1h-3v-1h-5v1h-2v-1h-10v1h-2v-1h-17v1h-2v-1h-2v1h-3v-1h-14v1h-2v-1h-16v1h-2v-1h-2v1h-2v-1h-2v1h-2v-1h-13v1h-1v-1h-4v1h-5v-1h-1v1h-1v-1h-29v1h-2v-1h-30v1h-3v-1h-8v1h-1v-1h-7v1h-2v-1h-9v1h-2v-1h-9v1h-5v-1h-4v1h-1v-1h-2v1h-2v-1h-3v1h-2v-1h-5v1h-1v-1h-7v1h-2v-1h-5v1h-1v-1h-1v1h-2v-1h-5v1h-2v-1h-2v3h-1v-2h-1v-1h-10v1h-1v-1h-1Z"/>
<path fill="#002161" d="M908 516h12v-2h1v1h1v1h3v-1h1v1h2v-1h3v1h5v-1h2v1h2v-1h2v1h6v-1h1v1h2v-1h1v1h4v-1h2v1h7v-1h1v1h7v-1h3v1h12v-1h2v1h6v-1h2v1h16v-1h1v1h4v-1h4v1h2v-1h1v1h7v-1h2v1h2v-1h2v1h3v-1h5v1h2v-1h2v1h7v-1h2v-1h1v1h1v1h7v-1h2v1h5v-1h1v1h2v-1h1v1h4v-1h7v-1h2v2h10v-1h2v1h3v-1h7v-1h2v1h2v-1h3v1h2v-1h1v1h1v-1h2v1h14v-1h1v1h10v-1h4v2h5v-1h1v1h2v-1h2v1h6v-1h2v1h2v-1h5v1h3v-1h1v1h3v-1h1v1h4v-1h2v1h3v-1h2v1h14v-1h3v1h13v-1h2v1h2v-3h1v2h1v1h8v-1h2v1h5v-1h1v1h2v-1h1v1h21v-1h1v1h20v-1h1v1h12v-1h1v1h7v-1h2v1h2v-1h2v1h10v-1h2v1h15v-1h2v1h2v-1h2v1h5v-1h2v1h4v-1h1v1h7v-1h1v1h7v-1h2v1h19v-2h1v1h5v1h10v-1h5v-1h2v1h12v-1h1v1h2v-1h2v1h1v1h3v-1h1v1h3v-1h15v1h5v-1h2v1h4v-1h1v1h9v-1h1v-1h2v1h2v-1h1v1h2v1h29v-1h1v1h2v-1h2v1h2v-1h2v1h37v3h-4v1h-1v-1h-3v1h-4v-1h-12v1h-1v-1h-17v1h-3v-1h-3v1h-1v-1h-1v1h-1v-1h-3v1h-1v-1h-22v-1h-4v1h-1v-1h-1v1h-1v1h-3v-1h-2v1h-4v-1h-11v-1h-3v1h-1v-1h-3v1h-2v-1h-6v2h-3v-1h-4v-1h-4v1h-2v-1h-6v1h-2v-1h-9v1h-3v1h-1v-1h-4v1h-1v-1h-3v-1h-1v1h-2v-1h-3v1h-24v1h-2v-1h-1v1h-1v-1h-17v1h-1v-1h-3v1h-2v-1h-1v1h-5v-1h-5v1h-2v-1h-16v1h-1v-1h-25v1h-4v-1h-4v1h-1v-1h-2v1h-2v-1h-1v1h-2v-1h-7v1h-3v-1h-15v1h-1v-1h-5v1h-2v-1h-1v1h-2v-1h-11v2h-1v-2h-1v1h-2v-1h-2v1h-5v-1h-7v1h-1v-1h-9v1h-2v-1h-17v1h-2v-1h-7v1h-4v-1h-20v-1h-14v1h-1v-1h-1v1h-2v-1h-3v1h-2v-1h-4v1h-1v-1h-15v1h-2v-1h-4v1h-2v1h-1v-1h-11v1h-1v-1h-1v-1h-7v1h-1v1h-1v-1h-1v1h-2v-1h-4v1h-2v-1h-15v-1h-1v1h-2v1h-2v-1h-4v1h-2v-1h-16v1h-1v-1h-5v1h-1v-1h-16v1h-2v-1h-28v1h-1v-1h-2v1h-2v-1h-1v1h-4v-1h-12v1h-2v-1h-6v1h-6v-1h-2v1h-2v-1h-9v1h-1v-1h-4v1h-1v-1h-2v2h-1v-1h-2v-1h-11Z"/>
<path fill="#808080" d="M908 537h6v-1h2v1h4v-2h1v2h3v-1h1v1h6v-1h3v1h1v-1h7v-1h3v1h17v-1h2v1h6v-1h2v1h1v-1h1v1h4v-1h2v1h6v-1h1v1h11v-1h3v1h2v-1h3v1h4v-1h1v1h7v-1h2v1h2v-1h2v1h1v-1h2v1h4v-1h1v-1h4v1h1v-1h3v1h2v-1h1v1h12v-1h2v1h5v-1h4v1h5v-1h2v1h31v-1h3v1h8v-1h2v1h10v-1h3v1h5v-1h2v1h4v-1h2v1h9v-1h2v1h2v-1h1v1h2v-1h2v1h2v-1h3v1h18v-1h2v1h3v-1h2v1h5v-1h2v1h4v-1h2v1h11v-1h1v1h1v-1h2v1h3v-1h3v1h3v-1h1v1h3v-1h2v1h1v-2h1v2h7v-1h2v1h1v-1h2v1h7v-1h4v1h1v-1h1v1h3v-1h1v1h4v-1h2v1h4v-1h3v1h9v-1h2v1h4v-1h1v1h3v-1h1v1h3v-1h1v1h6v-1h1v1h4v-1h7v-1h2v1h8v-1h1v1h13v-1h2v1h16v-1h3v1h8v-1h1v1h1v-1h2v1h5v-1h3v1h25v-1h3v-1h1v1h6v-1h2v1h10v-1h2v1h2v-1h2v1h12v-1h1v2h1v-1h1v1h8v-1h1v1h4v-1h3v1h7v-1h1v1h3v-1h1v1h2v-1h4v1h4v-1h1v1h1v-1h31v-1h1v1h10v-1h6v1h1v1h8v-1h8v-1h1v1h3v1h4v-1h2v1h5v3h-2v1h-1v-1h-3v1h-1v-1h-4v-1h-2v1h-1v-1h-2v1h-1v-1h-5v1h-1v1h-1v-1h-7v-1h-3v1h-1v-1h-2v1h-1v-1h-6v1h-2v-1h-7v1h-2v-1h-1v1h-2v-1h-6v1h-2v-1h-2v1h-2v-1h-2v1h-1v-1h-7v1h-10v1h-2v-1h-5v1h-2v-1h-1v1h-2v-1h-4v1h-2v-1h-2v1h-1v-1h-5v1h-2v-1h-3v1h-1v-2h-9v1h-1v-1h-2v1h-4v-1h-2v1h-1v-1h-7v1h-2v-1h-13v1h-11v1h-2v-1h-21v1h-1v-1h-4v1h-2v-1h-1v1h-1v-1h-1v1h-1v-1h-9v1h-2v-1h-9v1h-1v-1h-11v1h-2v-1h-2v1h-1v-1h-3v1h-1v-1h-8v1h-1v1h-1v-1h-7v1h-1v-1h-4v1h-2v-1h-2v1h-3v-1h-6v1h-1v-1h-6v1h-2v-1h-9v1h-4v-1h-1v1h-2v-1h-4v1h-4v-1h-4v1h-2v-1h-2v1h-2v-1h-2v1h-4v-1h-3v2h-1v-2h-9v1h-2v-1h-5v1h-3v-1h-1v1h-1v-1h-4v1h-2v-1h-10v1h-2v-1h-3v1h-1v-1h-2v1h-1v-1h-3v1h-2v-1h-8v1h-1v-1h-7v1h-1v-1h-3v1h-2v-1h-21v1h-3v-1h-4v1h-3v-1h-4v1h-3v-1h-14v1h-1v-1h-9v1h-1v-1h-6v1h-1v-1h-4v1h-2v-1h-15v1h-1v-1h-11v1h-1v-1h-11v1h-2v-1h-14v1h-2v1h-1v-1h-8v1h-2v-1h-17v1h-2v-1h-7v1h-2v-1h-13v1h-1v-1h-20v1h-2v-1h-16v1h-1v1h-3v-1h-12v1h-1v1h-1v-2h-2v1h-1v-1h-10Z"/>
<path fill="#ffbf00" d="M908 551h6v-1h2v1h1v-1h2v1h1v-2h1v1h2v1h4v-1h2v1h23v-1h1v1h1v-1h1v1h18v-1h2v1h3v-1h1v-1h2v1h1v1h4v-1h1v1h6v-1h1v1h2v-1h1v1h4v-1h14v-1h1v1h1v-1h2v1h6v-1h1v1h1v-1h4v1h9v-1h1v1h16v-1h2v1h1v-1h2v1h7v-1h1v1h6v-1h2v1h4v-1h1v1h23v-1h3v1h2v-1h2v1h2v-1h2v1h8v-1h2v1h7v-1h4v1h11v-1h1v1h2v-1h4v1h5v1h2v-1h1v1h2v-1h2v1h2v-1h1v1h14v-1h1v1h15v-1h6v1h1v-1h3v1h2v-1h1v1h8v-1h2v1h11v-2h1v2h8v-1h1v1h1v-1h3v1h4v-1h2v1h2v-1h1v1h16v-1h2v1h1v-1h1v1h8v-1h1v1h10v-1h2v-1h3v1h1v1h8v-1h4v1h2v-1h1v-1h2v1h7v-1h4v1h3v-1h2v1h3v-1h2v1h2v-1h2v1h10v-1h2v1h13v-1h2v1h1v-1h2v1h2v-1h1v1h12v-1h1v1h6v-1h3v1h6v-1h3v1h7v-1h2v1h12v-1h3v1h2v-1h1v1h4v-1h2v1h6v-1h3v1h2v-1h1v1h2v-1h2v1h4v-1h2v1h20v1h3v-1h1v-1h1v1h2v-1h2v1h3v-1h1v1h8v-1h2v1h3v1h6v-1h2v1h4v-2h2v1h5v-1h2v1h2v1h11v-1h2v1h3v-1h2v1h1v-1h1v1h3v-1h1v1h2v-1h1v1h7v-1h1v1h3v-1h2v4h-4v1h-2v-1h-29v1h-3v-1h-1v1h-1v-2h-1v1h-2v-1h-2v1h-2v-1h-4v2h-1v-1h-2v1h-2v-1h-4v1h-3v-2h-11v1h-2v-1h-6v1h-2v-1h-1v1h-4v-1h-5v1h-2v-1h-3v1h-1v-1h-2v1h-1v-1h-1v1h-1v-1h-2v1h-2v-1h-2v1h-1v-1h-1v1h-2v-1h-4v1h-1v-1h-1v1h-1v-1h-1v1h-2v-1h-2v1h-2v-1h-2v1h-2v-1h-8v1h-1v-1h-9v1h-2v-1h-1v1h-2v-1h-4v1h-2v-1h-1v1h-1v-1h-7v1h-2v-1h-19v1h-1v-1h-10v1h-1v-1h-1v1h-1v-1h-26v1h-1v-1h-5v1h-2v-1h-6v1h-1v-1h-3v1h-2v-1h-3v1h-2v1h-2v-1h-7v1h-2v-1h-3v-1h-5v2h-1v-1h-3v1h-2v-1h-13v1h-1v-1h-4v1h-1v-1h-4v1h-1v-1h-7v1h-2v-1h-20v1h-1v2h-1v-3h-5v1h-2v-1h-9v1h-7v-1h-1v1h-3v-1h-2v1h-1v-1h-22v1h-1v-1h-2v1h-2v-1h-6v1h-1v-1h-3v1h-1v-1h-6v1h-1v-1h-1v-1h-16v1h-2v-1h-1v1h-2v-1h-2v1h-1v-1h-6v1h-1v-1h-6v1h-1v-1h-7v1h-1v-1h-12v1h-1v-1h-6v1h-2v-1h-4v1h-1v-1h-20v1h-1v-1h-3v1h-2v-1h-2v1h-4v-1h-3v1h-2v-1h-2v1h-1v-1h-5v1h-2v-1h-4v1h-1v-1h-12v1h-2v-1h-2v1h-2v-1h-3v1h-1v-1h-3v1h-1v-1h-9v1h-7v1h-1v-1h-6v1h-2v-1h-3v-1h-4v1h-13v1h-2v-1h-2v1h-2v-1h-10v1h-2v-1h-3v1h-1v-1h-1v1h-1v-1h-1v1h-2v-1h-4v1h-2v-1h-5v1h-2v-1h-3v2h-1v-2h-7v1h-3v-1h-3Z"/>
<path fill="#ff0000" d="M908 574h3v-1h4v1h5v-2h1v2h7v-1h1v1h14v-1h5v1h2v-1h1v1h5v-1h1v1h13v-1h2v1h11v-1h2v1h7v-1h1v1h5v-1h2v-1h2v1h11v-1h1v1h3v-1h1v1h10v-1h3v1h20v-1h2v1h15v-1h1v1h8v-1h2v1h7v-1h1v1h10v-1h4v1h13v-1h2v1h2v-1h1v1h8v-1h2v1h4v-1h1v1h9v-1h4v1h3v-1h2v1h8v1h1v-1h1v1h2v-1h2v1h3v-1h10v-1h2v1h7v-1h2v1h4v-1h4v1h4v-1h1v1h1v-1h2v1h6v-1h1v1h2v-1h3v1h10v1h3v-1h1v1h1v-1h1v1h1v-3h1v2h1v1h7v-1h2v1h2v-1h3v1h7v-1h1v1h7v-1h1v1h2v-1h1v1h7v-1h1v1h8v-1h4v1h1v-1h3v-1h3v1h2v-1h2v1h6v-1h1v1h5v-1h1v1h4v-1h4v1h1v-1h1v1h2v-1h3v1h1v1h3v-1h2v1h14v-1h4v1h8v-1h1v1h1v-1h19v-1h2v1h2v-1h2v1h3v-1h5v1h8v-1h1v1h14v-1h2v1h5v-1h2v1h8v-1h1v1h2v-1h1v1h3v-1h1v1h2v-1h1v1h1v-1h3v1h2v-1h2v1h5v-1h1v1h9v-1h1v1h5v-1h2v1h2v-1h1v1h6v-1h2v1h15v-1h2v1h10v-1h2v1h7v-1h2v1h3v-1h2v2h17v-1h1v1h21v-2h1v1h1v3h-2v1h-3v1h-2v-1h-3v1h-2v-1h-3v1h-1v-1h-7v1h-2v-1h-12v1h-1v-1h-3v-1h-2v1h-3v-1h-10v1h-2v-1h-15v1h-1v-1h-1v1h-1v-1h-3v1h-3v-1h-6v1h-2v-1h-15v1h-4v-1h-12v1h-1v-1h-3v1h-1v-1h-14v1h-2v-1h-4v1h-1v-1h-6v1h-2v-1h-6v1h-1v-1h-3v1h-2v-1h-14v1h-3v-1h-10v1h-2v-1h-7v1h-1v-1h-6v1h-2v1h-2v-1h-4v1h-2v-1h-17v1h-1v-1h-3v1h-1v-1h-1v-1h-1v1h-2v-1h-5v1h-1v-1h-4v1h-2v-1h-8v1h-3v-1h-7v1h-2v-1h-1v1h-1v-1h-2v1h-9v1h-2v-1h-1v1h-2v-1h-6v1h-1v-1h-3v1h-2v-1h-2v1h-2v-1h-10v1h-2v-1h-12v2h-1v-2h-8v-1h-5v1h-1v-1h-11v1h-2v-1h-6v1h-1v-1h-8v1h-2v-1h-1v1h-2v-1h-12v1h-2v-1h-5v1h-1v1h-2v-1h-5v1h-2v-2h-7v1h-1v-1h-10v1h-2v-1h-1v1h-2v-1h-7v1h-2v-1h-4v1h-2v-1h-5v1h-1v-1h-22v1h-4v-1h-3v1h-3v-1h-2v1h-2v-1h-21v1h-2v-1h-6v1h-2v-1h-1v1h-2v-1h-12v1h-2v-1h-9v1h-6v-1h-9v1h-1v-1h-6v1h-1v1h-1v-1h-18v1h-2v-1h-5v1h-1v-1h-24v1h-1v-1h-5v1h-3v-1h-9v1h-2v-1h-5v1h-2v1h-1v-2h-7v1h-1v-1h-5Z"/>
<path fill="#e36b0a" d="M908 591h12v-2h1v2h5v-1h2v1h8v-1h26v-1h4v1h7v-1h1v1h1v-1h2v1h6v-1h4v1h9v-1h2v1h8v-1h1v1h21v-1h1v1h17v-1h1v-1h2v1h7v-1h6v1h1v-1h4v1h12v-1h2v1h2v-1h1v1h4v-1h2v1h6v1h2v-1h1v1h6v-1h2v-1h1v1h6v-1h2v1h7v-1h1v1h3v-1h1v1h3v-1h1v1h14v-1h1v1h10v-1h4v1h7v-1h1v1h40v-1h4v1h8v-1h2v1h3v-1h1v1h2v-1h2v1h2v-1h2v-1h1v2h35v-1h5v1h2v-1h1v1h5v-1h2v1h10v-1h2v1h17v-1h1v-1h1v1h8v-1h2v1h17v-1h1v1h12v-1h1v1h12v-1h2v1h3v-1h1v1h22v-1h2v1h3v-1h2v1h5v-1h1v1h4v-1h2v1h6v-1h2v1h3v-1h1v1h9v-1h4v1h8v-1h1v1h2v-1h4v1h27v-1h3v1h12v-1h1v1h9v-1h2v1h4v-1h1v1h5v-1h1v1h7v-1h2v1h2v-1h2v1h4v-1h3v1h2v-1h1v1h1v-1h3v1h3v-1h1v1h8v-1h1v1h11v3h-6v1h-5v-1h-6v1h-1v-1h-2v1h-1v-1h-3v1h-2v-1h-15v1h-3v-1h-3v1h-2v-1h-5v1h-1v-1h-11v1h-4v-1h-3v1h-2v-1h-4v1h-2v-1h-15v1h-4v-1h-9v1h-1v-1h-5v1h-2v-1h-4v1h-1v-1h-6v1h-2v-1h-10v1h-1v-1h-2v1h-1v-1h-3v1h-1v-1h-11v1h-3v-1h-1v1h-2v-1h-8v1h-2v-1h-3v1h-1v-1h-14v1h-2v-1h-1v1h-1v-1h-1v1h-3v-1h-10v1h-1v-1h-4v1h-2v-1h-4v1h-1v-1h-11v1h-2v-1h-8v1h-2v-1h-6v1h-2v-1h-4v1h-11v1h-1v-1h-3v1h-2v-1h-7v1h-2v-1h-11v1h-1v-1h-38v1h-2v1h-1v-2h-11v1h-1v-1h-6v1h-2v-1h-5v1h-2v-1h-8v1h-2v-1h-2v1h-4v-1h-2v1h-2v-1h-2v1h-2v-1h-2v1h-1v-1h-12v1h-1v-1h-1v1h-1v-1h-5v1h-2v-1h-7v1h-2v-1h-3v1h-1v-1h-9v1h-2v-1h-4v1h-4v-1h-11v1h-2v-1h-1v1h-2v-1h-3v1h-1v-1h-2v1h-1v1h-1v-1h-4v1h-2v-1h-2v-1h-5v1h-2v-1h-1v1h-1v-1h-10v1h-2v-1h-1v1h-2v-1h-1v1h-2v-1h-4v1h-3v-1h-6v1h-1v-1h-8v1h-4v1h-1v-1h-4v1h-1v-1h-4v1h-2v-1h-2v1h-3v-1h-1v1h-1v-1h-1v1h-1v-1h-7v1h-1v-1h-3v1h-1v-1h-19v1h-2v-1h-12v1h-2v-1h-16v1h-4v-1h-9v1h-2v-1h-4v1h-1v1h-2v-1h-6v1h-2v-1h-7v3h-1v-2h-1v-1h-2v1h-2v-1h-2v1h-2v-1h-2v1h-2Z"/>
<path fill="#d99694" d="M908 611h11v-1h1v-1h1v2h2v-1h1v1h3v-1h2v1h2v-1h2v1h6v-1h1v1h3v-1h2v1h4v-1h4v1h9v-1h4v1h3v-1h1v1h7v1h8v-1h1v1h1v-1h1v1h6v-1h2v1h2v-1h2v1h4v-1h1v1h12v-1h2v-1h2v1h11v-1h3v1h20v-1h3v1h2v1h10v-1h2v1h6v-1h1v1h2v-1h2v1h18v-1h2v1h1v-1h16v-1h2v1h2v-1h1v1h19v-1h2v1h9v-1h2v1h51v-1h2v1h3v-1h11v-1h1v1h10v-2h1v2h2v-1h1v1h9v-1h4v1h5v-1h4v1h3v1h2v-1h1v1h2v-1h1v1h1v-1h2v1h3v-1h2v1h5v-1h1v1h12v-1h3v1h4v-1h7v-1h1v1h10v-1h4v1h4v-1h3v1h1v-1h1v1h11v1h2v-1h3v1h14v-1h1v1h1v-1h3v1h5v-1h1v1h2v-1h2v1h4v-1h2v1h9v-1h2v1h1v-1h2v1h5v-1h1v1h2v-1h3v1h8v-1h9v-1h2v1h2v-1h2v1h5v1h12v-2h1v1h5v-1h1v1h4v-1h1v1h3v1h4v-1h1v1h3v-1h6v-1h2v1h8v-1h1v1h4v-1h2v1h8v-1h3v1h8v-1h1v1h4v-1h1v1h1v-1h2v1h24v-1h2v1h13v-1h2v1h8v3h-10v1h-2v-1h-1v1h-3v-1h-2v1h-2v-1h-1v1h-2v-1h-7v1h-2v-1h-2v1h-2v-1h-6v1h-3v-1h-5v1h-1v-1h-12v1h-1v-1h-5v1h-2v-1h-6v1h-2v-1h-7v1h-2v-1h-1v1h-2v-1h-7v2h-1v-1h-4v1h-2v-1h-6v-1h-4v1h-1v-1h-2v1h-1v-1h-2v2h-1v-1h-7v1h-2v-1h-4v-1h-1v1h-1v-1h-2v1h-2v-1h-6v1h-1v-1h-7v2h-1v-1h-2v1h-1v-1h-5v1h-2v-1h-9v1h-1v-1h-18v1h-1v-1h-6v1h-2v-1h-8v1h-1v-1h-16v-1h-3v1h-3v-1h-3v1h-1v-1h-7v1h-2v-1h-4v1h-1v-1h-2v1h-4v-1h-12v2h-2v-1h-12v1h-2v-1h-3v1h-2v-1h-1v1h-1v-1h-10v1h-1v-1h-5v-1h-11v1h-2v-1h-4v1h-1v-1h-1v1h-2v-1h-6v3h-1v-2h-1v-1h-22v2h-1v-1h-5v1h-1v-1h-14v1h-1v-1h-7v1h-1v-1h-2v1h-2v-1h-9v1h-2v-1h-13v1h-2v-1h-4v1h-2v-1h-1v1h-2v-1h-17v1h-2v-1h-13v1h-1v-1h-3v1h-3v-1h-1v1h-1v1h-1v-1h-18v1h-2v-1h-3v1h-2v-1h-5v1h-1v-1h-5v1h-1v-1h-5v-1h-4v1h-1v-1h-15v1h-2v-1h-20v1h-1v1h-1v-1h-2v1h-1v-1h-7v1h-1v-1h-14v1h-1v-1h-4v1h-4v-1h-2v1h-2v-1h-1v-1h-5v1h-2v-1h-1v1h-1v-1h-10v1h-1v-1h-2v1h-2v-1h-18v1h-4v-1h-9v2h-1v-2h-2v1h-2v-1h-9Z"/>
<path fill="#91d14f" d="M908 637h1v1h2v-1h2v1h2v-1h2v1h2v-1h1v-2h1v3h1v-1h2v1h1v-1h1v1h7v-1h1v1h6v-1h3v-1h2v1h2v-1h2v1h12v-1h1v1h8v-1h2v1h10v-1h7v1h15v-1h2v1h15v-1h20v-1h3v1h2v-1h1v1h2v-1h4v1h4v-1h1v1h2v-1h3v1h9v-1h1v1h7v-1h1v1h13v-1h1v1h18v-1h3v1h2v-1h15v-1h2v1h3v-1h1v1h13v-1h2v1h4v-1h2v1h1v-1h2v1h2v-1h1v1h5v-1h3v1h15v-1h2v1h11v-1h4v-1h1v1h1v-1h1v1h1v-1h4v1h6v-1h2v1h4v-1h1v1h8v-2h1v2h2v-1h2v1h13v-1h3v-1h2v1h7v-1h2v1h3v-1h1v1h3v-1h2v1h1v-1h1v1h3v-1h1v1h11v-1h2v1h2v-1h2v1h8v-2h2v1h3v-1h1v1h9v-1h1v1h10v-1h2v1h2v-1h1v1h5v-1h1v1h11v-1h2v1h2v-1h1v1h21v-1h2v1h1v-1h2v1h12v-2h2v1h1v-1h2v1h7v-1h1v1h1v-1h1v1h13v-1h3v1h13v-1h2v1h3v-1h1v1h2v-1h1v1h6v-1h2v1h13v-1h1v1h4v-1h1v1h3v-1h1v1h10v-1h1v-1h1v1h5v-1h3v1h1v-1h2v1h13v-1h2v1h10v-1h2v1h10v-1h1v1h2v-1h1v1h2v-1h2v1h15v-1h2v-1h1v1h5v3h-8v1h-25v1h-3v-1h-5v1h-1v-1h-2v1h-2v-1h-5v1h-1v-1h-4v1h-1v-1h-5v1h-1v-1h-14v1h-1v-1h-1v1h-1v-1h-1v1h-7v1h-1v-1h-5v1h-2v-1h-3v1h-1v-1h-1v1h-2v-1h-8v1h-3v-1h-2v1h-4v-1h-1v1h-1v-1h-1v1h-2v-1h-10v1h-3v-1h-5v1h-1v-1h-7v1h-1v-1h-1v1h-1v-1h-2v1h-2v-1h-3v1h-2v-1h-6v1h-1v-1h-1v1h-1v-1h-3v1h-4v1h-1v-1h-18v1h-2v-1h-2v1h-2v-1h-6v1h-1v-1h-14v1h-4v-1h-14v1h-1v-1h-2v1h-2v-1h-3v1h-2v-1h-1v1h-2v-1h-2v1h-1v-1h-7v2h-2v-1h-7v1h-1v-1h-2v1h-2v-1h-2v1h-1v-1h-12v1h-2v-1h-4v1h-1v-1h-18v1h-16v2h-1v-2h-1v1h-2v-1h-4v1h-1v-1h-2v1h-1v-1h-13v1h-2v-1h-8v1h-1v1h-2v-1h-3v1h-3v-1h-24v1h-1v-1h-6v1h-3v-1h-1v1h-2v-1h-10v1h-2v-1h-12v1h-3v-1h-11v2h-1v-1h-26v1h-1v-1h-19v1h-3v-1h-14v1h-2v-1h-5v1h-1v-1h-7v1h-2v-1h-4v1h-2v-1h-7v1h-3v1h-1v-1h-1v1h-2v-1h-7v1h-2v-1h-2v1h-3v-1h-4v1h-1v-1h-1v1h-2v-1h-2v1h-1v-1h-1v1h-2v-1h-11v1h-1v-1h-10v1h-4v-1h-3v1h-2v-1h-6v1h-1v-1h-8v1h-2v-1h-1v1h-14v1h-1v-1h-3v2h-1v-2h-3v1h-2v-1h-1v1h-3v-1h-4Z"/>
<path fill="#00b0f0" d="M908 657h1v1h2v-1h3v1h4v-1h1v1h1v-2h1v1h4v-1h2v1h2v-1h2v1h7v-1h1v1h22v-1h2v1h2v-1h8v1h2v-1h2v1h32v-1h3v-1h1v1h15v-1h2v1h2v-1h3v1h4v-1h3v1h10v-1h2v1h3v-1h1v1h1v-1h2v1h5v-1h13v-1h1v1h3v-1h2v1h17v-1h3v1h3v-1h2v1h4v-1h3v1h8v-1h2v1h4v-1h2v1h4v-1h2v1h31v-1h2v1h20v-1h4v1h14v-1h2v1h5v-1h2v1h10v-1h1v1h3v-1h2v-1h1v2h3v-1h4v-1h2v1h2v-1h2v1h3v-1h2v1h22v-1h3v1h18v-1h1v1h5v-1h3v1h2v-1h2v1h2v-1h1v1h10v-1h2v1h7v-1h14v-1h1v1h17v-1h2v1h2v-1h2v1h9v-1h2v1h8v-1h1v1h3v-1h1v1h18v-2h2v1h4v-1h3v1h6v-1h2v1h9v-1h2v1h8v-1h3v1h5v-1h3v1h9v-1h2v1h3v-1h1v1h8v-1h4v1h14v-1h1v1h3v-1h2v1h6v-1h1v1h1v-1h1v1h3v-1h2v1h4v-1h1v1h2v-1h2v1h4v-1h7v1h5v-1h4v1h5v-1h2v1h4v-1h1v1h8v-1h3v1h1v3h-4v1h-4v-1h-2v1h-1v-1h-4v1h-2v-1h-11v1h-1v-1h-1v1h-2v-1h-3v-1h-4v2h-1v-1h-6v1h-1v-1h-12v1h-3v-1h-2v1h-2v-1h-1v1h-2v-1h-9v1h-2v-1h-7v1h-1v-1h-6v1h-2v-1h-13v1h-2v-1h-3v1h-1v-1h-6v1h-1v-1h-3v1h-1v-1h-9v1h-4v-1h-5v1h-2v-1h-4v1h-1v-1h-4v1h-1v-1h-5v2h-2v-1h-5v1h-2v-1h-12v1h-1v-1h-8v1h-2v-1h-6v1h-2v-1h-8v1h-3v-1h-8v1h-1v-1h-5v1h-4v-1h-11v1h-1v1h-3v-1h-3v1h-3v-1h-11v1h-2v-1h-22v1h-1v-1h-17v1h-2v-1h-4v1h-1v-1h-2v1h-1v-1h-9v1h-1v-1h-8v1h-4v2h-1v-2h-5v1h-1v-1h-11v1h-1v-1h-21v1h-1v-1h-9v1h-2v-1h-3v1h-1v-1h-2v1h-1v-1h-5v1h-1v-1h-4v1h-1v-1h-5v1h-4v-1h-5v1h-2v-1h-7v1h-2v-1h-4v1h-2v-1h-2v1h-2v-1h-2v1h-2v-1h-5v1h-1v-1h-7v1h-2v-1h-5v1h-1v-1h-6v1h-2v-1h-19v1h-2v-1h-12v1h-12v1h-1v-1h-1v1h-1v-1h-3v1h-1v-1h-34v1h-1v-1h-3v1h-2v1h-1v-1h-8v1h-2v-1h-1v1h-1v-1h-7v1h-1v-1h-19v1h-1v-1h-4v1h-1v-1h-10v1h-1v-1h-2v1h-1v-1h-3v1h-1v-1h-18v1h-2v-1h-1v2h-1v-1h-2v1h-1v-1h-2v1h-4v-1h-1v1h-1v-1h-2Z"/>
<path fill="#ff0066" d="M908 664h1v-1h1v1h10v-3h1v2h1v1h5v-1h3v1h1v-1h2v1h6v-1h2v1h1v1h11v1h11v1h1v-1h1v1h1v-1h8v-1h2v1h4v-1h2v1h12v-1h1v1h12v-1h2v1h11v-1h1v1h2v-1h2v1h4v-1h2v-1h2v1h11v-1h1v1h4v-1h4v-1h2v1h1v-1h2v1h2v-1h1v1h2v-1h2v1h5v-1h1v1h1v1h6v-1h2v1h3v-1h4v1h5v-1h2v1h13v-1h1v1h11v-1h2v1h5v-1h1v1h2v1h24v-1h3v1h12v-1h2v1h10v-1h1v1h10v-1h2v1h10v-1h2v1h1v1h1v-1h4v1h11v-1h2v1h5v-1h5v-2h1v3h4v-1h1v1h13v-1h1v1h10v-1h2v1h3v-1h2v1h6v-1h4v1h13v-1h2v2h5v-1h1v1h4v-1h2v1h10v-1h2v1h6v-1h5v1h2v-1h1v1h4v-1h1v1h3v-1h2v1h6v-1h2v1h8v1h2v-1h1v1h1v-1h2v1h15v-1h1v1h4v-1h2v1h11v-1h2v1h9v-1h1v1h6v-1h4v1h9v-1h1v1h2v-1h2v1h3v-1h2v1h8v-1h2v2h2v-1h1v1h3v-1h1v1h1v-1h1v1h1v-1h4v-1h1v1h1v1h8v-1h1v1h2v-1h4v1h3v-1h3v1h11v-1h2v1h1v-1h2v1h7v-1h1v1h12v-1h1v1h9v-1h1v1h6v-1h2v1h15v-1h3v1h3v-1h2v2h5v-1h2v4h-5v1h-2v-1h-1v-1h-16v1h-1v-1h-2v1h-1v-1h-9v1h-2v-1h-1v1h-3v-1h-15v1h-1v-1h-3v1h-4v-1h-11v1h-1v-1h-6v1h-2v-1h-21v-1h-1v1h-3v1h-2v-1h-1v1h-1v-1h-6v1h-1v-1h-1v-1h-1v1h-1v-1h-2v1h-1v-1h-11v1h-2v-1h-3v1h-1v-1h-5v1h-1v-1h-2v1h-1v-1h-3v1h-1v-1h-3v1h-1v-1h-7v1h-2v-1h-1v1h-2v-1h-7v1h-1v-1h-3v1h-2v-1h-3v1h-5v-1h-14v1h-1v-1h-2v-1h-2v1h-2v-1h-2v1h-2v-1h-2v1h-3v-1h-8v1h-2v-1h-14v1h-2v-1h-3v1h-1v-1h-3v1h-1v-1h-6v1h-1v-1h-10v-1h-9v1h-1v-1h-1v1h-2v-1h-1v1h-2v-1h-5v1h-2v-1h-1v1h-1v-1h-13v1h-2v-1h-3v1h-2v-1h-6v1h-1v-1h-8v3h-1v-3h-10v1h-4v-1h-5v1h-2v-1h-7v1h-1v-1h-1v-1h-7v1h-2v-1h-2v1h-2v-1h-7v1h-2v-1h-9v1h-4v-1h-10v1h-2v-1h-10v1h-2v-1h-12v1h-1v-1h-2v1h-1v-1h-1v-1h-3v1h-1v-1h-4v1h-4v-1h-17v1h-1v-1h-4v1h-1v-1h-3v1h-2v-1h-7v1h-2v-1h-2v1h-3v-1h-3v-1h-7v1h-2v-1h-13v1h-8v1h-2v-1h-11v1h-9v1h-2v-1h-2v1h-4v-1h-9v1h-3v-1h-9v1h-2v-1h-2v1h-1v-1h-18v1h-1v-1h-1v1h-1v1h-2v-1h-2v-1h-9v-1h-6v1h-2v-1h-3v-1h-3v1h-1v-1h-6v1h-2v-1h-1v1h-1v-1h-6v2h-1v-2h-3v1h-1v-1h-9Z"/>
<path fill="#00b04f" d="M908 679h11v-1h1v-2h1v2h1v1h1v-1h1v1h6v-1h2v1h12v-1h1v1h5v-1h1v1h6v-1h1v1h12v-1h2v1h6v-1h1v1h9v1h2v-1h2v1h6v-1h2v1h11v-1h2v1h4v-1h2v1h2v-1h1v1h7v-1h1v1h22v-1h1v1h4v1h9v-1h2v1h17v-1h2v1h2v-1h2v1h5v-1h5v1h6v-1h1v1h2v-1h4v1h6v-1h1v1h9v-1h1v1h1v-1h1v1h5v-1h1v1h2v-1h2v1h7v-1h1v1h2v-1h1v1h4v-1h1v1h14v-1h1v1h8v-1h2v1h1v-1h2v1h4v-1h2v1h5v-1h2v1h8v-1h2v1h16v-1h2v1h4v-1h1v1h2v-2h1v1h1v1h8v-1h1v1h11v-1h2v1h3v-1h2v1h11v-1h2v1h1v1h8v-1h2v1h10v-1h2v1h3v-1h2v1h8v-1h2v1h2v-1h2v1h10v-1h3v1h17v1h4v-1h1v1h7v-1h4v1h2v-1h2v1h10v-1h2v1h20v-1h2v1h8v-1h1v1h3v-1h2v1h15v-1h2v1h2v-1h2v1h12v-1h1v1h2v1h2v-1h4v1h3v-1h1v1h2v-1h2v1h11v-1h1v1h14v-1h2v1h5v-1h10v-1h2v1h2v1h4v-1h1v1h7v-1h8v-1h3v1h1v-1h1v1h3v1h1v-1h2v1h15v-1h4v1h1v-1h2v1h6v3h-2v1h-2v-1h-24v1h-1v-1h-3v1h-1v-1h-3v-1h-5v1h-2v-1h-4v1h-4v1h-1v-1h-2v1h-1v-1h-4v-1h-1v1h-2v-1h-1v1h-1v-1h-7v1h-15v1h-4v-1h-22v1h-3v-1h-3v1h-1v-1h-2v1h-1v-2h-9v1h-1v-1h-7v1h-2v-1h-1v1h-1v-1h-5v1h-2v-1h-10v1h-2v-1h-12v1h-2v-1h-1v1h-3v-1h-1v1h-3v-1h-21v1h-1v-1h-5v1h-1v-1h-3v1h-1v-1h-1v1h-1v-1h-6v-1h-6v1h-1v-1h-9v1h-1v-1h-21v1h-2v-1h-7v1h-1v-1h-2v1h-1v-1h-1v1h-1v-1h-4v1h-3v-1h-3v1h-1v-1h-7v-1h-6v1h-2v-1h-4v1h-2v-1h-3v1h-3v-1h-4v1h-2v-1h-1v1h-2v-1h-1v1h-2v-1h-2v1h-2v-1h-5v2h-1v-2h-6v1h-1v-1h-4v1h-1v-1h-6v1h-1v-1h-1v1h-2v-1h-2v1h-1v-1h-3v1h-1v-1h-1v1h-1v-1h-14v1h-1v-1h-8v1h-1v-1h-1v1h-1v-1h-7v1h-2v-1h-5v1h-1v-1h-4v1h-2v-1h-18v1h-1v-1h-4v1h-2v-1h-2v1h-4v-1h-3v1h-2v-1h-16v1h-1v-1h-14v1h-1v-1h-9v1h-2v-1h-8v1h-3v-1h-3v1h-1v-1h-4v1h-2v-1h-1v-1h-1v1h-1v-1h-1v1h-1v-1h-8v1h-2v-1h-10v1h-2v-1h-2v1h-1v-1h-11v1h-1v-1h-13v1h-1v-1h-8v1h-2v-1h-1v1h-1v-1h-2v-1h-5v1h-5v-1h-10v1h-3v-1h-6v1h-1v-1h-15v1h-7v-1h-6v1h-1v-1h-7v2h-1v-2h-1v1h-1v-1h-5v1h-1v-1h-3v1h-2Z"/>
<path fill="#0070bf" d="M908 707h12v-2h1v2h13v-1h3v1h1v-1h8v-1h4v1h3v-1h2v1h6v-1h1v1h8v-1h1v1h15v-1h6v1h14v-1h4v1h1v1h9v-1h3v-1h1v1h7v-1h3v1h3v-1h1v2h9v-1h4v1h1v-1h7v1h4v-1h2v1h1v-1h1v1h9v-1h1v1h2v-1h2v1h1v-1h1v1h4v-1h1v1h4v-1h1v1h3v-1h1v1h6v-1h5v1h2v-1h1v1h19v-1h2v1h4v-1h3v1h11v-1h1v1h5v-1h2v1h14v-1h1v1h2v-1h2v1h12v-1h1v1h7v-1h1v1h2v-1h1v1h10v-1h1v1h14v-1h2v1h5v-1h2v-1h1v2h2v-1h1v1h3v-1h2v1h13v-1h2v1h11v-1h3v1h22v-1h1v1h11v-1h2v1h4v-1h3v-1h3v1h6v1h10v-1h1v1h6v-1h9v1h6v-1h3v1h5v-1h2v1h5v-1h2v1h13v-1h1v1h8v-1h1v1h17v-1h1v1h1v-1h1v1h2v-1h1v1h2v-1h1v1h5v-1h1v1h1v-1h1v1h3v-1h6v1h6v-1h2v1h2v-1h2v1h4v-1h2v1h4v-1h2v1h10v1h6v-1h1v1h3v-1h9v-1h2v1h8v1h7v-1h5v-1h1v1h1v-1h1v1h19v-1h2v1h30v-1h1v1h3v3h-8v1h-2v-1h-1v1h-2v-1h-17v1h-3v-1h-3v1h-1v-1h-10v1h-1v-1h-1v1h-2v-1h-2v1h-1v-1h-9v2h-1v-1h-1v1h-1v-1h-5v-1h-1v1h-1v-1h-8v1h-2v-1h-2v1h-1v-1h-3v1h-2v1h-1v-1h-4v1h-3v-2h-2v1h-3v-1h-3v1h-1v-1h-1v1h-3v-1h-2v1h-2v-1h-5v1h-1v-1h-1v1h-3v-1h-5v1h-2v-1h-2v1h-2v-1h-4v1h-3v-1h-2v1h-4v-1h-15v1h-1v-1h-2v1h-1v-1h-7v1h-1v-1h-4v1h-2v-1h-2v1h-1v-1h-2v1h-1v-1h-2v1h-1v-1h-17v1h-2v-1h-3v1h-2v-1h-10v-1h-5v1h-3v1h-1v-1h-15v-1h-7v1h-2v1h-2v-1h-15v1h-2v-1h-8v1h-2v-1h-5v1h-2v-1h-14v1h-1v-1h-1v1h-2v-1h-6v1h-1v-1h-8v1h-2v-1h-2v1h-1v-1h-3v2h-1v-2h-18v1h-1v-1h-6v1h-2v-1h-18v1h-2v-1h-5v1h-2v-1h-3v1h-1v-1h-2v1h-2v-1h-14v1h-2v-1h-4v1h-1v-1h-7v1h-2v-1h-5v1h-1v-1h-7v1h-2v-1h-6v1h-2v-1h-2v1h-1v-1h-3v1h-3v-1h-2v1h-2v-1h-7v1h-1v-1h-11v1h-1v-1h-2v1h-3v-1h-1v1h-1v-1h-2v1h-2v-1h-4v1h-2v-1h-5v1h-4v-1h-3v-1h-1v1h-1v-1h-3v2h-6v-1h-10v-1h-16v1h-1v-1h-1v1h-7v1h-2v-1h-4v-1h-3v1h-3v-1h-16v1h-1v-1h-5v1h-1v-1h-2v1h-1v-1h-13v1h-2v-1h-12v1h-2v-1h-6v1h-11v1h-2v-1h-2v1h-3v1h-1v-2h-4v1h-2v-1h-2v1h-2v-1h-2v1h-1Z"/>
<path fill="#bf0000" d="M908 711h3v-1h3v1h2v-1h3v1h1v-1h2v1h1v1h1v-1h7v-1h1v2h2v-1h6v1h2v-1h5v1h6v-2h2v1h1v1h1v-1h1v-1h1v1h1v-1h1v2h1v-1h3v1h2v-1h1v1h1v-1h9v1h2v-1h2v1h1v-1h2v1h7v-1h3v1h1v-1h1v1h2v-1h3v1h2v-1h3v1h2v-1h1v1h3v1h2v-1h1v1h2v-1h1v-1h1v1h6v-1h1v1h3v1h2v-1h3v1h1v-1h1v-1h1v1h3v1h1v-2h1v1h2v-1h1v2h1v-1h2v1h6v-1h1v1h3v-1h1v-1h1v1h1v1h3v-1h1v-1h1v1h1v1h1v-2h1v2h2v-1h3v1h1v-1h1v1h1v-1h1v1h1v-1h13v1h3v1h2v-1h6v1h2v-1h5v1h2v-1h1v1h2v-1h2v1h2v-2h1v1h4v1h1v-1h1v1h4v-2h1v1h1v1h1v-1h6v1h1v-1h2v-1h1v1h2v1h2v-1h4v1h1v-2h1v1h1v1h4v-1h3v1h1v-1h1v1h1v-1h2v1h1v-1h4v1h3v-1h5v-1h1v1h2v1h6v-2h1v1h1v-1h1v1h3v1h4v-1h1v-1h1v1h1v2h3v-1h8v1h2v-1h2v-1h2v1h1v1h1v-1h3v1h1v-2h1v1h5v1h1v-1h3v-1h1v2h1v-1h10v1h1v-1h1v-1h1v2h2v-2h2v1h1v1h1v-1h4v1h3v-1h4v-1h1v1h1v1h1v-1h1v1h2v-1h1v1h6v-1h1v1h2v-1h1v1h2v-1h1v-1h1v1h2v-1h1v2h1v-1h1v-1h1v2h6v1h4v-1h2v1h7v-1h9v1h1v-1h1v1h2v-1h2v1h1v-1h1v1h1v-1h1v-1h2v1h4v1h1v-1h1v-1h1v1h1v-1h1v1h1v1h4v-2h1v2h1v-1h1v1h3v-1h2v1h2v-1h4v1h1v-1h4v1h1v-1h1v1h1v-1h1v1h2v-1h1v1h2v-1h1v-1h1v1h2v2h1v-2h2v1h2v1h9v-1h2v-1h1v2h3v-1h1v1h1v-1h1v1h3v-1h2v1h4v-1h1v1h1v-1h1v-1h1v1h1v1h2v-1h1v1h1v-1h4v1h1v-1h2v1h1v-1h3v1h4v-1h2v1h1v-1h6v1h2v-2h1v1h2v-2h1v2h9v-1h2v1h4v1h2v-1h3v1h1v1h1v-1h1v1h4v-1h2v-1h1v1h2v-1h1v2h1v-1h1v1h1v-1h3v1h2v-2h1v1h4v1h3v-1h8v-1h1v1h4v1h2v-2h1v1h1v-1h1v1h4v1h1v-1h2v1h1v-1h2v1h3v-1h2v-1h1v1h1v1h4v-1h2v1h2v-1h3v1h1v-1h3v1h2v-1h2v1h1v-1h1v-1h1v1h1v-1h1v2h1v-1h1v1h1v-1h5v1h2v-1h4v6h-1v-1h-1v1h-1v-1h-1v1h-1v1h-1v-2h-5v1h-5v-1h-1v1h-3v-1h-3v1h-1v-1h-5v1h-2v1h-1v-1h-2v1h-1v-1h-1v-1h-1v1h-1v-1h-1v1h-4v-1h-2v1h-3v-1h-1v1h-6v-1h-1v1h-1v1h-1v-1h-4v-1h-1v1h-9v1h-2v-1h-2v-1h-1v1h-1v-1h-1v2h-2v-2h-4v1h-2v-1h-2v2h-1v-1h-2v-1h-3v1h-1v-1h-3v1h-1v1h-2v-2h-3v-1h-2v1h-1v-1h-1v2h-1v-1h-1v1h-1v-1h-2v1h-1v-1h-1v-1h-1v1h-4v1h-1v-2h-2v1h-1v-1h-2v1h-1v-1h-3v1h-1v-1h-3v1h-1v-1h-1v1h-7v-1h-2v1h-7v-1h-3v1h-2v-1h-3v1h-1v-1h-3v1h-14v-1h-1v1h-1v1h-2v-2h-1v1h-3v-1h-1v1h-4v-1h-1v1h-1v-2h-5v1h-4v1h-1v-1h-2v1h-1v-1h-2v1h-1v-1h-2v-1h-2v1h-3v1h-1v-1h-2v1h-1v-1h-5v-1h-2v1h-6v-1h-1v1h-1v1h-1v-1h-3v-1h-6v2h-1v-1h-3v-1h-1v1h-2v-1h-2v1h-4v-1h-2v1h-3v-1h-2v1h-4v-1h-3v1h-4v1h-1v-1h-1v-2h-1v2h-1v-2h-2v1h-4v1h-1v-2h-1v1h-2v-1h-2v1h-3v-1h-1v1h-1v1h-4v-1h-1v-1h-3v1h-6v-1h-3v1h-1v-1h-3v1h-1v-1h-2v1h-3v-1h-1v1h-2v-1h-2v1h-6v2h-1v-2h-2v-1h-1v2h-1v-1h-3v1h-1v-1h-1v-1h-1v1h-3v-1h-1v1h-2v-1h-2v1h-1v1h-1v-1h-3v-1h-1v1h-2v1h-2v-1h-1v-1h-2v1h-1v-1h-1v1h-1v-1h-8v-1h-2v1h-2v1h-1v-2h-1v1h-6v-1h-2v2h-1v-1h-1v1h-1v-1h-10v-1h-1v1h-7v-1h-3v1h-1v1h-1v-2h-2v1h-8v-1h-4v1h-1v-1h-2v1h-2v-1h-2v1h-4v-1h-2v1h-5v1h-1v-1h-2v-1h-2v1h-1v-1h-1v1h-2v1h-1v-1h-7v1h-1v-1h-1v1h-1v-2h-1v1h-1v1h-1v-1h-4v1h-2v-2h-4v1h-1v-1h-1v1h-1v-1h-4v-1h-1v1h-2v-1h-1v1h-7v-1h-5v1h-2v-1h-3v1h-4v1h-1v-1h-3v1h-1v-2h-2v1h-3v-1h-3v2h-3v-1h-4v-1h-1v1h-1v1h-1v-1h-1v-1h-1v1h-1v-1h-2v1h-2v-1h-2v1h-6v-1h-1v1h-1v1h-1v-2h-2v1h-2v1h-1v-2h-2v1h-2v-2h-2v1h-1v-1h-5v1h-1v-1h-2v1h-1v-1h-1v2h-1v-1h-2v1h-1v-1h-1v-1h-2v1h-1v-1h-3v1h-1v-1h-1v2h-1v-1h-1v1h-1v-1h-1v1h-1v-1h-1v-1h-2v1h-1v1h-1v-1h-1v-1h-4v2h-1v-1h-1v1h-1v-2h-2v1h-2v-1h-1v1h-3v-1h-2v1h-4v1h-1v-1h-1v1h-2v-1h-1v-1h-2v1h-2v-1h-1v1h-3v1h-1v-1h-5v-1h-3v1h-1v-1h-2v1h-1v-1h-1v3h-1v-2h-1v-1h-2v1h-1v-2h-1v1h-1v1h-1v-1h-4v1h-1v-1h-1Z"/>
<path fill="#0000ff" d="M908 737h6v-1h1v1h5v-2h1v2h4v-1h1v1h4v-1h2v1h13v1h16v-1h1v1h1v-1h2v1h10v-1h1v1h5v-1h2v1h4v-1h2v1h19v-1h2v1h8v-1h1v1h11v-1h1v1h10v-1h3v1h3v-1h2v1h6v-1h2v1h4v-1h2v1h4v1h19v-1h6v1h6v-1h1v1h8v-1h2v1h1v-1h1v1h17v-1h1v1h6v-1h3v1h5v-1h2v1h2v-1h2v1h13v-1h1v1h2v-1h1v1h10v-1h2v1h4v-1h2v1h2v-1h3v1h18v-1h5v1h5v-1h1v1h3v-1h1v1h13v-2h1v2h5v-1h3v1h2v-1h2v1h2v-1h1v1h2v-1h2v1h4v-1h5v1h3v-1h1v1h7v1h9v-1h2v1h4v-1h1v1h14v-1h1v1h4v-1h2v1h3v-1h1v1h13v-1h2v1h4v-1h1v1h4v-1h1v1h8v-1h3v1h1v-1h2v1h11v-1h2v1h8v-1h1v1h12v-1h1v1h5v-1h3v1h11v-1h1v1h9v-1h1v1h3v1h7v-2h1v1h8v1h2v-1h2v1h1v-1h2v1h4v-1h1v1h8v-1h4v1h3v-1h3v1h9v-1h1v1h3v-1h2v1h13v-1h2v1h5v-1h1v1h12v-1h2v1h6v-1h1v1h3v-1h2v1h7v-1h2v1h2v-1h2v1h3v-1h1v1h12v-1h1v1h1v-1h1v1h9v-1h1v4h-2v1h-2v-1h-15v1h-3v-1h-4v1h-2v-1h-3v1h-2v-1h-3v1h-3v-1h-4v1h-2v-1h-6v1h-2v-1h-6v1h-2v-1h-4v1h-2v-1h-13v1h-2v-1h-22v1h-1v-1h-6v1h-4v-1h-2v1h-4v1h-1v-2h-2v1h-1v-1h-7v1h-1v-1h-1v-1h-9v1h-2v1h-2v-1h-6v-1h-12v1h-3v-1h-7v1h-2v-1h-8v1h-2v-1h-19v1h-2v-1h-9v1h-3v-1h-11v1h-1v-1h-4v1h-3v-1h-11v1h-1v-1h-7v1h-5v-1h-1v1h-1v-1h-12v1h-1v-1h-1v1h-3v-1h-5v1h-2v-1h-2v1h-2v-1h-8v-1h-19v1h-2v-1h-1v1h-2v-1h-2v1h-1v-1h-5v1h-1v-1h-2v2h-1v-2h-18v1h-3v-1h-12v1h-2v-1h-11v1h-1v-1h-15v1h-2v-1h-22v1h-3v-1h-1v1h-2v-1h-18v1h-1v-1h-2v1h-1v-1h-3v1h-1v-1h-2v1h-1v-1h-1v1h-1v-1h-26v1h-2v-1h-6v1h-4v-1h-2v1h-2v-1h-4v-1h-3v1h-3v-1h-1v1h-1v-1h-6v1h-2v-1h-6v1h-1v-1h-6v1h-1v-1h-8v1h-4v-1h-3v1h-1v-1h-9v1h-1v-1h-2v1h-3v-1h-2v1h-2v-1h-2v1h-2v-1h-9v1h-1v-1h-2v1h-4v-1h-10v1h-2v-1h-12v1h-2v-1h-10v1h-1v-1h-2v-1h-9v1h-1v-1h-5v1h-1v-1h-5v2h-1v-2h-7v1h-2v-1h-4Z"/>
<rect x="908" y="761" width="665" height="1" fill="#00ff00"/>
</svg>
<div id="ylwrap"><div class="yl" style="top:148.8px">EEG Fp1</div><div class="yl" style="top:167.7px">EEG Fp2</div><div class="yl" style="top:186.5px">EEG F7</div><div class="yl" style="top:205.4px">EEG F3</div><div class="yl" style="top:224.3px">EEG Fz</div><div class="yl" style="top:243.2px">EEG F4</div><div class="yl" style="top:262.0px">EEG F8</div><div class="yl" style="top:280.9px">EEG Fc5</div><div class="yl" style="top:299.8px">EEG Fc1</div><div class="yl" style="top:318.6px">EEG Fc2</div><div class="yl" style="top:337.5px">EEG Fc6</div><div class="yl" style="top:356.4px">EEG T3</div><div class="yl" style="top:375.2px">EEG C3</div><div class="yl" style="top:394.1px">EEG Cz</div><div class="yl" style="top:413.0px">EEG C4</div><div class="yl" style="top:431.9px">EEG T4</div><div class="yl" style="top:450.7px">EEG Cp5</div><div class="yl" style="top:469.6px">EEG Cp1</div><div class="yl" style="top:488.5px">EEG Cp2</div><div class="yl" style="top:507.3px">EEG Cp6</div><div class="yl" style="top:526.2px">EEG T5</div><div class="yl" style="top:545.1px">EEG P3</div><div class="yl" style="top:563.9px">EEG Pz</div><div class="yl" style="top:582.8px">EEG P4</div><div class="yl" style="top:601.7px">EEG T6</div><div class="yl" style="top:620.5px">EEG O1</div><div class="yl" style="top:639.4px">EEG O2</div><div class="yl" style="top:658.3px">EOG VEOG_I</div><div class="yl" style="top:677.2px">EOG VEOG_II</div><div class="yl" style="top:696.0px">REF_EEG REF_EEG</div><div class="yl" style="top:714.9px">ECG ECG1</div><div class="yl" style="top:733.8px">ECG ECG2</div><div class="yl" style="top:752.6px">DIG DTRIG</div></div>
<div class="xl" style="left:868.5px">360.00</div><div class="xl" style="left:934.5px">372.00</div><div class="xl" style="left:1000.5px">384.00</div><div class="xl" style="left:1067.5px">396.00</div><div class="xl" style="left:1133.5px">408.00</div><div class="xl" style="left:1200.5px">420.00</div><div class="xl" style="left:1266.5px">432.00</div><div class="xl" style="left:1332.5px">443.99</div><div class="xl" style="left:1399.5px">455.99</div><div class="xl" style="left:1465.5px">467.99</div><div class="xl" style="left:1532.5px">479.99</div>
<div class="abs" style="left:1199px;top:804px;width:80px;text-align:center;font-size:16px;line-height:19px;color:#333;transform:scaleX(1.08)">time</div>
<div class="btn" style="left:1576px;top:143px;width:66px;height:29px;line-height:27px">preproc</div><div class="btn" style="left:1576px;top:183px;width:66px;height:28px;line-height:26px">identify</div><div class="btn pink" style="left:1576px;top:269px;width:66px;height:29px;line-height:27px">visual</div><div class="btn pink" style="left:1576px;top:304px;width:23px;height:29px;line-height:27px">&lt;</div><div class="btn pink" style="left:1619px;top:304px;width:23px;height:29px;line-height:27px">&gt;</div><div class="btn" style="left:805px;top:828px;width:85px;height:39px;line-height:37px">segment</div><div class="btn" style="left:899px;top:828px;width:42px;height:39px;line-height:37px">&lt;</div><div class="btn" style="left:951px;top:828px;width:42px;height:39px;line-height:37px">&gt;</div><div class="btn" style="left:1002px;top:828px;width:85px;height:39px;line-height:37px">channel</div><div class="btn" style="left:1096px;top:828px;width:42px;height:39px;line-height:37px">&lt;</div><div class="btn" style="left:1147px;top:828px;width:42px;height:39px;line-height:37px">&gt;</div><div class="btn" style="left:1199px;top:828px;width:84px;height:39px;line-height:37px">horizontal</div><div class="btn" style="left:1293px;top:828px;width:42px;height:39px;line-height:37px">-</div><div class="btn" style="left:1344px;top:828px;width:42px;height:39px;line-height:37px">+</div><div class="btn" style="left:1397px;top:828px;width:84px;height:39px;line-height:37px">vertical</div><div class="btn" style="left:1490px;top:828px;width:42px;height:39px;line-height:37px">-</div><div class="btn" style="left:1541px;top:828px;width:42px;height:39px;line-height:37px">+</div>
</body></html>
